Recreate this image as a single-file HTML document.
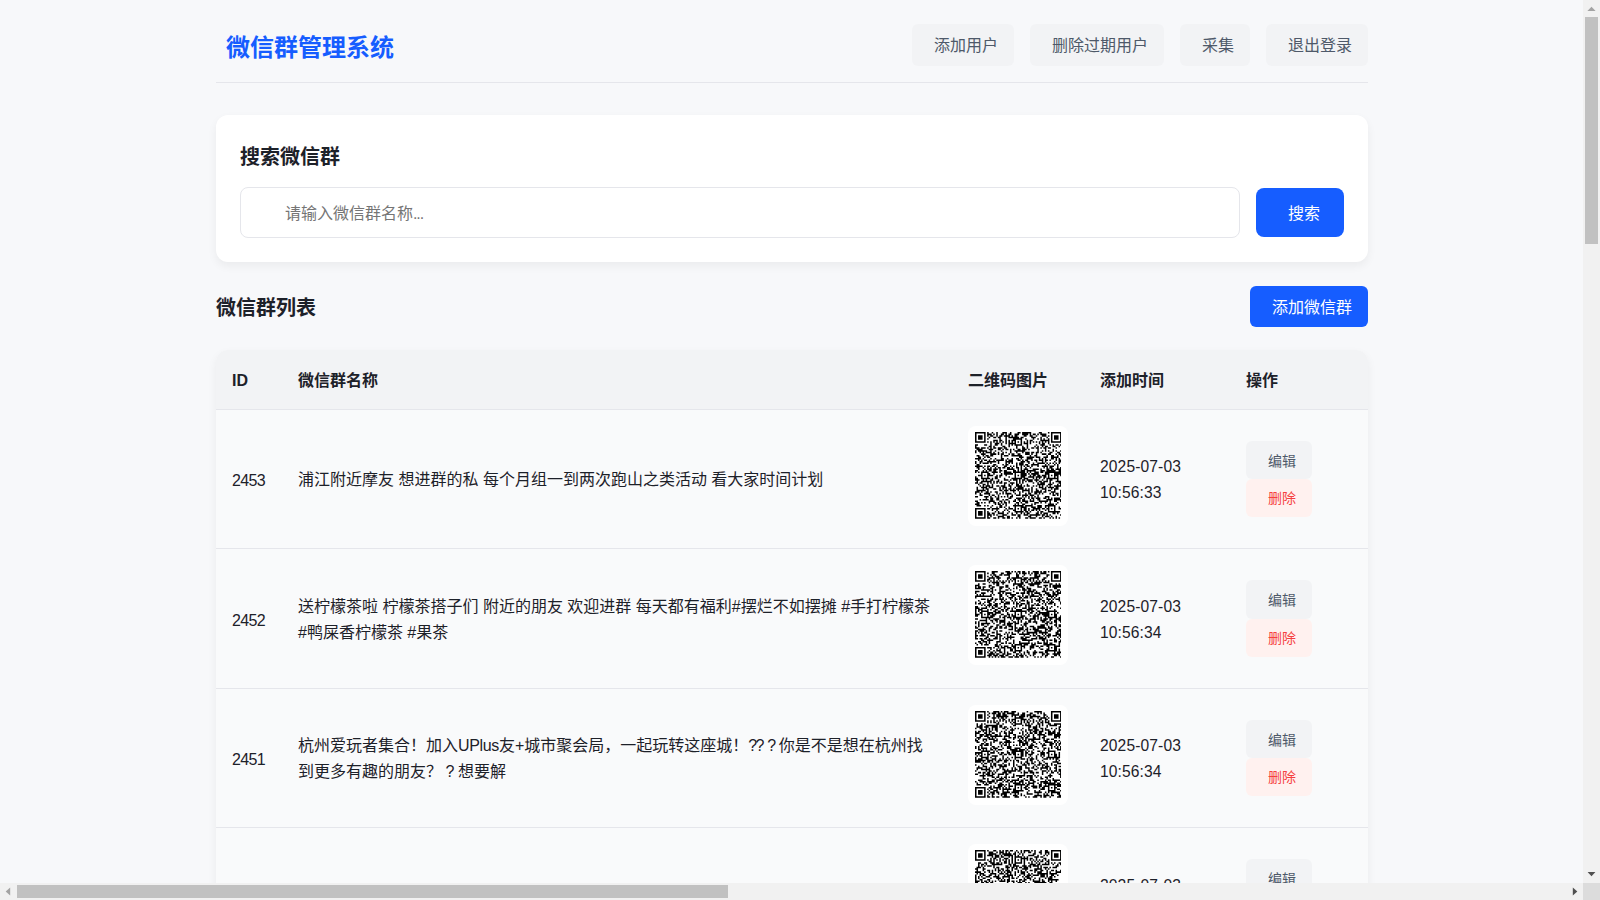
<!DOCTYPE html>
<html lang="zh-CN">
<head>
<meta charset="utf-8">
<title>微信群管理系统</title>
<style>
*{box-sizing:border-box;margin:0;padding:0}
html,body{width:1600px;height:900px;overflow:hidden}
body{background:#f7f8fa;color:#1d2129;font-family:"Liberation Sans","Noto Sans CJK SC",sans-serif;font-size:16px;line-height:25.6px;position:relative}
.page{position:absolute;left:0;top:0;width:1583px;height:883px;overflow:hidden}
.container{position:absolute;left:216px;top:0;width:1152px}
.header{position:absolute;left:0;top:0;width:1152px;height:83px;border-bottom:1px solid #e5e6eb}
.logo{position:absolute;left:10px;top:29px;font-size:24px;line-height:38.4px;font-weight:700;color:#165dff;white-space:nowrap}
.nav{position:absolute;right:0;top:24px;display:flex;gap:16px}
.nb{height:42px;border-radius:6px;background:#f2f3f5;color:#4e5969;padding:9px 16px 7px 22px;white-space:nowrap;font-size:16px;line-height:25.6px}
.card{position:absolute;left:0;top:115px;width:1152px;height:147px;background:#fff;border-radius:12px;box-shadow:0 4px 10px rgba(0,0,0,.055)}
.card h2{position:absolute;left:24px;top:26px;font-size:20px;line-height:32px;font-weight:700;color:#1d2129}
.inp{position:absolute;left:24px;top:72px;width:1000px;height:51px;border:1px solid #e5e6eb;border-radius:8px;background:#fff;padding:13px 16px 11px 44px;color:#757575;font-size:16px;line-height:25.6px}
.sbtn{position:absolute;left:1040px;top:73px;width:88px;height:49px;border-radius:8px;background:#165dff;color:#fff;padding:13px 24px 11px 32px;font-size:16px;line-height:25.6px;white-space:nowrap}
.sec h2{position:absolute;left:0;top:292px;font-size:20px;line-height:32px;font-weight:700;color:#1d2129}
.abtn{position:absolute;left:1034px;top:286px;width:118px;height:41px;border-radius:6px;background:#165dff;color:#fff;padding:9px 16px 7px 22px;font-size:16px;line-height:25.6px;white-space:nowrap}
.tbl{position:absolute;left:0;top:350px;width:1152px;height:700px;background:#f9fafb;border-radius:12px 12px 0 0;box-shadow:0 4px 10px rgba(0,0,0,.055);overflow:hidden}
.th{position:absolute;left:0;top:0;width:1152px;height:60px;background:#f2f3f5;border-bottom:1px solid #e5e6eb;font-weight:700}
.th span{position:absolute;top:18px;white-space:nowrap}
.row{position:absolute;left:0;width:1152px;border-bottom:1px solid #e5e6eb}
.c{position:absolute;top:0;bottom:0;display:flex;align-items:center;white-space:nowrap}
.id{left:16px;padding-top:4px;font-size:16px;letter-spacing:-.65px}
.nm{left:82px;padding-top:2px}
.q{position:absolute;left:752px;top:16px;width:100px;height:100px;background:#fff;border-radius:8px}
.q svg{position:absolute;left:6.6px;top:6.4px;width:86.6px;height:86.8px;display:block}
.dt{left:884px;padding-top:2px;font-size:15.6px;letter-spacing:.12px}
.ac{left:1030px;flex-direction:column;justify-content:center;align-items:flex-start}
.eb,.db{width:66px;height:38.4px;border-radius:6px;font-size:14px;line-height:22.4px;padding:8px 16px 8px 22px;flex:none}
.eb{background:#f2f3f5;color:#4e5969;padding-top:9px;padding-bottom:7px}
.db{background:#fff1ef;color:#f53f3f}
.l1{letter-spacing:-.35px}
.l2{word-spacing:-1.7px}
.l3{letter-spacing:-1.7px}
.l4{word-spacing:-.9px}
/* scrollbars */
.vsb{position:absolute;left:1583px;top:0;width:17px;height:883px;background:#f1f1f1}
.vsb .thumb{position:absolute;left:2px;top:17px;width:13px;height:227px;background:#c1c1c1}
.hsb{position:absolute;left:0;top:883px;width:1583px;height:17px;background:#f1f1f1}
.hsb .thumb{position:absolute;left:17px;top:2px;width:711px;height:13px;background:#c1c1c1}
.corner{position:absolute;left:1583px;top:883px;width:17px;height:17px;background:#dcdcdc}
</style>
</head>
<body>
<div class="page">
<div class="container">
  <div class="header">
    <div class="logo">微信群管理系统</div>
    <div class="nav">
      <div class="nb">添加用户</div>
      <div class="nb">删除过期用户</div>
      <div class="nb">采集</div>
      <div class="nb">退出登录</div>
    </div>
  </div>
  <div class="card">
    <h2>搜索微信群</h2>
    <div class="inp">请输入微信群名称<span style="letter-spacing:-1.1px">...</span></div>
    <div class="sbtn">搜索</div>
  </div>
  <div class="sec">
    <h2>微信群列表</h2>
    <div class="abtn">添加微信群</div>
  </div>
  <div class="tbl">
    <div class="th">
      <span style="left:16px">ID</span>
      <span style="left:82px">微信群名称</span>
      <span style="left:752px">二维码图片</span>
      <span style="left:884px">添加时间</span>
      <span style="left:1030px">操作</span>
    </div>
    <div class="row" style="top:60px;height:139px">
      <div class="c id">2453</div>
      <div class="c nm"><div>浦江附近摩友 想进群的私 每个月组一到两次跑山之类活动 看大家时间计划</div></div>
      <div class="q"><svg viewBox="0 0 57 57"><path fill="#000" d="M0 0h7v1h-7zM8 0h1v1h-1zM11 0h1v1h-1zM14 0h1v1h-1zM18 0h3v1h-3zM23 0h1v1h-1zM28 0h2v1h-2zM31 0h6v1h-6zM42 0h2v1h-2zM48 0h1v1h-1zM50 0h7v1h-7zM0 1h1v1h-1zM6 1h1v1h-1zM8 1h3v1h-3zM12 1h1v1h-1zM14 1h1v1h-1zM17 1h2v1h-2zM20 1h1v1h-1zM22 1h2v1h-2zM26 1h3v1h-3zM31 1h4v1h-4zM36 1h1v1h-1zM38 1h2v1h-2zM41 1h1v1h-1zM43 1h4v1h-4zM50 1h1v1h-1zM56 1h1v1h-1zM0 2h1v1h-1zM2 2h3v1h-3zM6 2h1v1h-1zM8 2h1v1h-1zM10 2h2v1h-2zM14 2h1v1h-1zM16 2h2v1h-2zM19 2h4v1h-4zM24 2h1v1h-1zM26 2h2v1h-2zM32 2h2v1h-2zM36 2h2v1h-2zM40 2h1v1h-1zM44 2h3v1h-3zM48 2h1v1h-1zM50 2h1v1h-1zM52 2h3v1h-3zM56 2h1v1h-1zM0 3h1v1h-1zM2 3h3v1h-3zM6 3h1v1h-1zM9 3h1v1h-1zM12 3h2v1h-2zM15 3h2v1h-2zM20 3h1v1h-1zM22 3h7v1h-7zM30 3h2v1h-2zM37 3h3v1h-3zM43 3h1v1h-1zM47 3h1v1h-1zM50 3h1v1h-1zM52 3h3v1h-3zM56 3h1v1h-1zM0 4h1v1h-1zM2 4h3v1h-3zM6 4h1v1h-1zM8 4h1v1h-1zM16 4h1v1h-1zM20 4h1v1h-1zM25 4h6v1h-6zM33 4h1v1h-1zM38 4h1v1h-1zM41 4h1v1h-1zM43 4h1v1h-1zM45 4h1v1h-1zM48 4h1v1h-1zM50 4h1v1h-1zM52 4h3v1h-3zM56 4h1v1h-1zM0 5h1v1h-1zM6 5h1v1h-1zM12 5h3v1h-3zM16 5h2v1h-2zM20 5h1v1h-1zM22 5h1v1h-1zM24 5h3v1h-3zM30 5h1v1h-1zM34 5h1v1h-1zM36 5h2v1h-2zM43 5h6v1h-6zM50 5h1v1h-1zM56 5h1v1h-1zM0 6h7v1h-7zM8 6h1v1h-1zM10 6h1v1h-1zM12 6h1v1h-1zM14 6h1v1h-1zM16 6h1v1h-1zM18 6h1v1h-1zM20 6h1v1h-1zM22 6h1v1h-1zM24 6h1v1h-1zM26 6h1v1h-1zM28 6h1v1h-1zM30 6h1v1h-1zM32 6h1v1h-1zM34 6h1v1h-1zM36 6h1v1h-1zM38 6h1v1h-1zM40 6h1v1h-1zM42 6h1v1h-1zM44 6h1v1h-1zM46 6h1v1h-1zM48 6h1v1h-1zM50 6h7v1h-7zM10 7h1v1h-1zM13 7h3v1h-3zM17 7h1v1h-1zM20 7h1v1h-1zM22 7h5v1h-5zM30 7h1v1h-1zM32 7h3v1h-3zM36 7h1v1h-1zM42 7h1v1h-1zM44 7h2v1h-2zM48 7h1v1h-1zM0 8h2v1h-2zM6 8h2v1h-2zM10 8h1v1h-1zM13 8h2v1h-2zM17 8h1v1h-1zM22 8h1v1h-1zM24 8h1v1h-1zM26 8h5v1h-5zM34 8h1v1h-1zM40 8h1v1h-1zM43 8h3v1h-3zM49 8h1v1h-1zM51 8h1v1h-1zM53 8h2v1h-2zM56 8h1v1h-1zM0 9h1v1h-1zM9 9h2v1h-2zM12 9h1v1h-1zM18 9h2v1h-2zM22 9h1v1h-1zM27 9h1v1h-1zM31 9h1v1h-1zM34 9h1v1h-1zM39 9h1v1h-1zM41 9h1v1h-1zM44 9h1v1h-1zM46 9h2v1h-2zM51 9h2v1h-2zM55 9h1v1h-1zM0 10h3v1h-3zM4 10h3v1h-3zM8 10h1v1h-1zM10 10h1v1h-1zM12 10h2v1h-2zM15 10h3v1h-3zM19 10h2v1h-2zM27 10h1v1h-1zM31 10h2v1h-2zM34 10h1v1h-1zM37 10h2v1h-2zM40 10h2v1h-2zM43 10h1v1h-1zM45 10h2v1h-2zM48 10h2v1h-2zM53 10h1v1h-1zM1 11h4v1h-4zM9 11h3v1h-3zM15 11h2v1h-2zM18 11h1v1h-1zM20 11h2v1h-2zM23 11h1v1h-1zM25 11h1v1h-1zM28 11h2v1h-2zM31 11h3v1h-3zM35 11h1v1h-1zM41 11h1v1h-1zM46 11h1v1h-1zM51 11h1v1h-1zM0 12h1v1h-1zM2 12h6v1h-6zM10 12h1v1h-1zM13 12h1v1h-1zM17 12h1v1h-1zM23 12h1v1h-1zM26 12h7v1h-7zM41 12h1v1h-1zM44 12h1v1h-1zM46 12h1v1h-1zM48 12h1v1h-1zM51 12h1v1h-1zM53 12h1v1h-1zM56 12h1v1h-1zM0 13h1v1h-1zM3 13h1v1h-1zM5 13h1v1h-1zM7 13h4v1h-4zM12 13h1v1h-1zM15 13h1v1h-1zM18 13h1v1h-1zM20 13h1v1h-1zM23 13h1v1h-1zM27 13h1v1h-1zM31 13h1v1h-1zM33 13h3v1h-3zM37 13h2v1h-2zM40 13h2v1h-2zM43 13h1v1h-1zM49 13h2v1h-2zM54 13h2v1h-2zM4 14h3v1h-3zM10 14h4v1h-4zM15 14h1v1h-1zM17 14h2v1h-2zM22 14h1v1h-1zM24 14h2v1h-2zM28 14h2v1h-2zM33 14h3v1h-3zM37 14h1v1h-1zM40 14h1v1h-1zM44 14h3v1h-3zM48 14h2v1h-2zM53 14h1v1h-1zM55 14h2v1h-2zM1 15h2v1h-2zM5 15h1v1h-1zM7 15h2v1h-2zM10 15h2v1h-2zM17 15h1v1h-1zM19 15h3v1h-3zM24 15h7v1h-7zM36 15h1v1h-1zM39 15h2v1h-2zM47 15h1v1h-1zM50 15h2v1h-2zM54 15h1v1h-1zM56 15h1v1h-1zM2 16h2v1h-2zM6 16h1v1h-1zM8 16h2v1h-2zM17 16h1v1h-1zM29 16h3v1h-3zM34 16h5v1h-5zM40 16h3v1h-3zM45 16h3v1h-3zM50 16h5v1h-5zM0 17h4v1h-4zM5 17h1v1h-1zM10 17h1v1h-1zM13 17h1v1h-1zM17 17h2v1h-2zM21 17h1v1h-1zM24 17h1v1h-1zM27 17h2v1h-2zM30 17h1v1h-1zM34 17h4v1h-4zM42 17h1v1h-1zM44 17h1v1h-1zM46 17h1v1h-1zM50 17h2v1h-2zM53 17h1v1h-1zM55 17h1v1h-1zM2 18h1v1h-1zM4 18h1v1h-1zM6 18h2v1h-2zM9 18h1v1h-1zM12 18h1v1h-1zM14 18h5v1h-5zM20 18h1v1h-1zM22 18h3v1h-3zM28 18h2v1h-2zM31 18h1v1h-1zM33 18h2v1h-2zM37 18h1v1h-1zM39 18h2v1h-2zM42 18h3v1h-3zM46 18h2v1h-2zM49 18h1v1h-1zM53 18h1v1h-1zM55 18h2v1h-2zM0 19h1v1h-1zM3 19h2v1h-2zM8 19h6v1h-6zM15 19h1v1h-1zM20 19h5v1h-5zM30 19h3v1h-3zM34 19h2v1h-2zM40 19h1v1h-1zM44 19h1v1h-1zM46 19h1v1h-1zM52 19h1v1h-1zM55 19h2v1h-2zM0 20h1v1h-1zM3 20h1v1h-1zM5 20h4v1h-4zM10 20h1v1h-1zM15 20h1v1h-1zM20 20h1v1h-1zM22 20h1v1h-1zM24 20h1v1h-1zM27 20h1v1h-1zM29 20h3v1h-3zM35 20h1v1h-1zM38 20h1v1h-1zM41 20h5v1h-5zM47 20h1v1h-1zM49 20h1v1h-1zM51 20h1v1h-1zM53 20h1v1h-1zM55 20h1v1h-1zM1 21h2v1h-2zM12 21h2v1h-2zM18 21h1v1h-1zM20 21h2v1h-2zM27 21h1v1h-1zM29 21h3v1h-3zM33 21h2v1h-2zM37 21h5v1h-5zM46 21h1v1h-1zM48 21h1v1h-1zM52 21h1v1h-1zM54 21h1v1h-1zM0 22h5v1h-5zM6 22h1v1h-1zM8 22h2v1h-2zM11 22h2v1h-2zM14 22h1v1h-1zM19 22h2v1h-2zM23 22h1v1h-1zM25 22h1v1h-1zM27 22h1v1h-1zM30 22h1v1h-1zM32 22h1v1h-1zM34 22h2v1h-2zM37 22h1v1h-1zM41 22h1v1h-1zM44 22h4v1h-4zM49 22h3v1h-3zM54 22h1v1h-1zM1 23h2v1h-2zM5 23h1v1h-1zM8 23h1v1h-1zM10 23h1v1h-1zM13 23h1v1h-1zM15 23h2v1h-2zM18 23h2v1h-2zM21 23h2v1h-2zM24 23h1v1h-1zM27 23h2v1h-2zM30 23h1v1h-1zM33 23h1v1h-1zM36 23h1v1h-1zM45 23h1v1h-1zM47 23h1v1h-1zM49 23h2v1h-2zM54 23h1v1h-1zM56 23h1v1h-1zM2 24h1v1h-1zM6 24h1v1h-1zM8 24h3v1h-3zM12 24h3v1h-3zM16 24h1v1h-1zM21 24h5v1h-5zM28 24h1v1h-1zM30 24h1v1h-1zM32 24h3v1h-3zM38 24h4v1h-4zM43 24h1v1h-1zM47 24h2v1h-2zM50 24h2v1h-2zM53 24h4v1h-4zM0 25h2v1h-2zM5 25h1v1h-1zM7 25h1v1h-1zM9 25h2v1h-2zM12 25h2v1h-2zM16 25h2v1h-2zM19 25h2v1h-2zM25 25h2v1h-2zM28 25h1v1h-1zM30 25h3v1h-3zM34 25h6v1h-6zM43 25h3v1h-3zM47 25h6v1h-6zM55 25h2v1h-2zM0 26h1v1h-1zM2 26h1v1h-1zM4 26h5v1h-5zM11 26h4v1h-4zM16 26h1v1h-1zM19 26h5v1h-5zM25 26h8v1h-8zM34 26h1v1h-1zM36 26h1v1h-1zM39 26h3v1h-3zM43 26h2v1h-2zM46 26h11v1h-11zM4 27h1v1h-1zM8 27h2v1h-2zM12 27h1v1h-1zM17 27h1v1h-1zM19 27h6v1h-6zM26 27h1v1h-1zM30 27h4v1h-4zM35 27h1v1h-1zM37 27h5v1h-5zM46 27h3v1h-3zM52 27h5v1h-5zM2 28h3v1h-3zM6 28h1v1h-1zM8 28h4v1h-4zM14 28h1v1h-1zM16 28h2v1h-2zM20 28h1v1h-1zM26 28h1v1h-1zM28 28h1v1h-1zM30 28h4v1h-4zM36 28h1v1h-1zM38 28h2v1h-2zM41 28h2v1h-2zM44 28h3v1h-3zM48 28h1v1h-1zM50 28h1v1h-1zM52 28h3v1h-3zM56 28h1v1h-1zM0 29h1v1h-1zM4 29h1v1h-1zM8 29h1v1h-1zM13 29h2v1h-2zM16 29h1v1h-1zM22 29h1v1h-1zM26 29h1v1h-1zM30 29h3v1h-3zM35 29h4v1h-4zM40 29h4v1h-4zM45 29h2v1h-2zM48 29h1v1h-1zM52 29h1v1h-1zM54 29h1v1h-1zM0 30h2v1h-2zM4 30h6v1h-6zM11 30h1v1h-1zM13 30h2v1h-2zM19 30h1v1h-1zM24 30h7v1h-7zM32 30h3v1h-3zM38 30h1v1h-1zM40 30h1v1h-1zM42 30h1v1h-1zM45 30h1v1h-1zM47 30h8v1h-8zM0 31h3v1h-3zM5 31h1v1h-1zM7 31h1v1h-1zM10 31h2v1h-2zM15 31h1v1h-1zM19 31h3v1h-3zM23 31h1v1h-1zM25 31h3v1h-3zM29 31h1v1h-1zM31 31h2v1h-2zM34 31h4v1h-4zM39 31h3v1h-3zM44 31h1v1h-1zM47 31h1v1h-1zM49 31h2v1h-2zM54 31h1v1h-1zM1 32h1v1h-1zM4 32h7v1h-7zM12 32h1v1h-1zM14 32h2v1h-2zM17 32h1v1h-1zM22 32h1v1h-1zM27 32h1v1h-1zM29 32h1v1h-1zM31 32h1v1h-1zM33 32h1v1h-1zM35 32h3v1h-3zM40 32h1v1h-1zM42 32h2v1h-2zM45 32h3v1h-3zM49 32h1v1h-1zM53 32h4v1h-4zM0 33h2v1h-2zM3 33h2v1h-2zM8 33h1v1h-1zM10 33h1v1h-1zM12 33h1v1h-1zM14 33h1v1h-1zM16 33h2v1h-2zM19 33h2v1h-2zM23 33h3v1h-3zM27 33h1v1h-1zM29 33h1v1h-1zM31 33h1v1h-1zM38 33h1v1h-1zM41 33h1v1h-1zM43 33h3v1h-3zM49 33h1v1h-1zM51 33h1v1h-1zM55 33h2v1h-2zM2 34h1v1h-1zM5 34h2v1h-2zM8 34h1v1h-1zM11 34h1v1h-1zM19 34h1v1h-1zM22 34h1v1h-1zM24 34h1v1h-1zM27 34h2v1h-2zM30 34h1v1h-1zM34 34h1v1h-1zM41 34h5v1h-5zM48 34h3v1h-3zM54 34h1v1h-1zM56 34h1v1h-1zM3 35h1v1h-1zM5 35h1v1h-1zM7 35h3v1h-3zM11 35h1v1h-1zM14 35h2v1h-2zM17 35h3v1h-3zM22 35h2v1h-2zM27 35h4v1h-4zM32 35h1v1h-1zM34 35h2v1h-2zM38 35h1v1h-1zM40 35h1v1h-1zM42 35h1v1h-1zM44 35h1v1h-1zM47 35h1v1h-1zM49 35h1v1h-1zM52 35h5v1h-5zM1 36h1v1h-1zM4 36h4v1h-4zM9 36h3v1h-3zM16 36h1v1h-1zM18 36h3v1h-3zM23 36h1v1h-1zM26 36h1v1h-1zM28 36h4v1h-4zM37 36h1v1h-1zM42 36h3v1h-3zM46 36h1v1h-1zM48 36h4v1h-4zM53 36h2v1h-2zM1 37h1v1h-1zM5 37h1v1h-1zM7 37h2v1h-2zM12 37h2v1h-2zM16 37h1v1h-1zM18 37h1v1h-1zM20 37h1v1h-1zM22 37h2v1h-2zM25 37h1v1h-1zM27 37h5v1h-5zM33 37h1v1h-1zM35 37h1v1h-1zM37 37h1v1h-1zM40 37h1v1h-1zM44 37h3v1h-3zM50 37h1v1h-1zM52 37h3v1h-3zM1 38h6v1h-6zM8 38h1v1h-1zM16 38h2v1h-2zM19 38h3v1h-3zM23 38h4v1h-4zM28 38h1v1h-1zM31 38h5v1h-5zM37 38h1v1h-1zM40 38h2v1h-2zM43 38h1v1h-1zM46 38h1v1h-1zM48 38h2v1h-2zM52 38h1v1h-1zM56 38h1v1h-1zM0 39h3v1h-3zM4 39h1v1h-1zM7 39h2v1h-2zM10 39h1v1h-1zM13 39h2v1h-2zM18 39h1v1h-1zM20 39h1v1h-1zM25 39h1v1h-1zM29 39h1v1h-1zM31 39h1v1h-1zM35 39h1v1h-1zM37 39h1v1h-1zM39 39h5v1h-5zM45 39h2v1h-2zM50 39h3v1h-3zM56 39h1v1h-1zM0 40h1v1h-1zM3 40h1v1h-1zM6 40h4v1h-4zM14 40h1v1h-1zM16 40h1v1h-1zM18 40h1v1h-1zM20 40h4v1h-4zM26 40h1v1h-1zM29 40h1v1h-1zM33 40h1v1h-1zM35 40h2v1h-2zM39 40h2v1h-2zM42 40h1v1h-1zM44 40h1v1h-1zM49 40h1v1h-1zM51 40h1v1h-1zM53 40h2v1h-2zM56 40h1v1h-1zM3 41h2v1h-2zM9 41h1v1h-1zM11 41h2v1h-2zM15 41h1v1h-1zM21 41h1v1h-1zM24 41h1v1h-1zM27 41h3v1h-3zM31 41h4v1h-4zM36 41h3v1h-3zM41 41h1v1h-1zM51 41h2v1h-2zM54 41h1v1h-1zM56 41h1v1h-1zM0 42h2v1h-2zM6 42h3v1h-3zM10 42h1v1h-1zM13 42h1v1h-1zM15 42h1v1h-1zM17 42h1v1h-1zM19 42h1v1h-1zM21 42h1v1h-1zM23 42h2v1h-2zM31 42h1v1h-1zM33 42h1v1h-1zM35 42h1v1h-1zM37 42h1v1h-1zM39 42h1v1h-1zM41 42h1v1h-1zM46 42h3v1h-3zM56 42h1v1h-1zM7 43h1v1h-1zM10 43h2v1h-2zM14 43h2v1h-2zM22 43h2v1h-2zM27 43h4v1h-4zM32 43h1v1h-1zM35 43h1v1h-1zM37 43h2v1h-2zM40 43h3v1h-3zM45 43h2v1h-2zM48 43h1v1h-1zM50 43h1v1h-1zM52 43h4v1h-4zM3 44h1v1h-1zM5 44h4v1h-4zM10 44h2v1h-2zM14 44h2v1h-2zM18 44h1v1h-1zM20 44h2v1h-2zM26 44h1v1h-1zM28 44h2v1h-2zM31 44h2v1h-2zM36 44h1v1h-1zM38 44h1v1h-1zM41 44h2v1h-2zM47 44h4v1h-4zM52 44h5v1h-5zM0 45h2v1h-2zM9 45h4v1h-4zM16 45h2v1h-2zM19 45h1v1h-1zM22 45h1v1h-1zM25 45h2v1h-2zM29 45h1v1h-1zM31 45h4v1h-4zM36 45h3v1h-3zM42 45h6v1h-6zM49 45h1v1h-1zM52 45h2v1h-2zM56 45h1v1h-1zM1 46h2v1h-2zM4 46h1v1h-1zM6 46h1v1h-1zM9 46h1v1h-1zM12 46h2v1h-2zM15 46h1v1h-1zM17 46h1v1h-1zM19 46h2v1h-2zM22 46h1v1h-1zM27 46h2v1h-2zM30 46h1v1h-1zM33 46h2v1h-2zM39 46h3v1h-3zM43 46h1v1h-1zM46 46h1v1h-1zM49 46h1v1h-1zM54 46h1v1h-1zM0 47h3v1h-3zM13 47h1v1h-1zM15 47h2v1h-2zM18 47h1v1h-1zM20 47h1v1h-1zM26 47h1v1h-1zM28 47h1v1h-1zM31 47h2v1h-2zM37 47h1v1h-1zM39 47h1v1h-1zM48 47h4v1h-4zM53 47h1v1h-1zM1 48h3v1h-3zM6 48h1v1h-1zM8 48h1v1h-1zM11 48h1v1h-1zM16 48h2v1h-2zM20 48h1v1h-1zM25 48h7v1h-7zM33 48h5v1h-5zM41 48h3v1h-3zM46 48h7v1h-7zM10 49h1v1h-1zM14 49h1v1h-1zM16 49h2v1h-2zM19 49h1v1h-1zM22 49h1v1h-1zM26 49h1v1h-1zM30 49h4v1h-4zM37 49h3v1h-3zM41 49h3v1h-3zM46 49h1v1h-1zM48 49h1v1h-1zM52 49h1v1h-1zM55 49h1v1h-1zM0 50h7v1h-7zM8 50h2v1h-2zM11 50h5v1h-5zM20 50h1v1h-1zM22 50h3v1h-3zM26 50h1v1h-1zM28 50h1v1h-1zM30 50h1v1h-1zM32 50h2v1h-2zM35 50h1v1h-1zM38 50h5v1h-5zM44 50h2v1h-2zM47 50h2v1h-2zM50 50h1v1h-1zM52 50h1v1h-1zM55 50h2v1h-2zM0 51h1v1h-1zM6 51h1v1h-1zM11 51h1v1h-1zM14 51h1v1h-1zM19 51h1v1h-1zM21 51h1v1h-1zM25 51h2v1h-2zM30 51h1v1h-1zM32 51h2v1h-2zM35 51h1v1h-1zM37 51h2v1h-2zM40 51h1v1h-1zM42 51h1v1h-1zM46 51h1v1h-1zM48 51h1v1h-1zM52 51h1v1h-1zM0 52h1v1h-1zM2 52h3v1h-3zM6 52h1v1h-1zM8 52h1v1h-1zM13 52h1v1h-1zM15 52h1v1h-1zM18 52h1v1h-1zM22 52h1v1h-1zM26 52h6v1h-6zM33 52h2v1h-2zM36 52h1v1h-1zM41 52h1v1h-1zM43 52h2v1h-2zM48 52h8v1h-8zM0 53h1v1h-1zM2 53h3v1h-3zM6 53h1v1h-1zM8 53h2v1h-2zM11 53h2v1h-2zM15 53h4v1h-4zM21 53h1v1h-1zM24 53h1v1h-1zM27 53h1v1h-1zM30 53h1v1h-1zM32 53h1v1h-1zM34 53h2v1h-2zM40 53h2v1h-2zM43 53h1v1h-1zM45 53h3v1h-3zM51 53h2v1h-2zM54 53h1v1h-1zM0 54h1v1h-1zM2 54h3v1h-3zM6 54h1v1h-1zM8 54h3v1h-3zM12 54h1v1h-1zM14 54h1v1h-1zM18 54h3v1h-3zM24 54h3v1h-3zM28 54h2v1h-2zM32 54h3v1h-3zM36 54h7v1h-7zM44 54h2v1h-2zM47 54h1v1h-1zM49 54h1v1h-1zM56 54h1v1h-1zM0 55h1v1h-1zM6 55h1v1h-1zM8 55h1v1h-1zM10 55h1v1h-1zM15 55h4v1h-4zM21 55h2v1h-2zM28 55h2v1h-2zM35 55h2v1h-2zM40 55h1v1h-1zM44 55h1v1h-1zM46 55h3v1h-3zM50 55h1v1h-1zM53 55h1v1h-1zM0 56h7v1h-7zM8 56h2v1h-2zM12 56h2v1h-2zM15 56h1v1h-1zM18 56h2v1h-2zM21 56h2v1h-2zM24 56h1v1h-1zM27 56h1v1h-1zM29 56h1v1h-1zM33 56h2v1h-2zM36 56h4v1h-4zM42 56h2v1h-2zM45 56h1v1h-1zM49 56h1v1h-1zM51 56h1v1h-1zM53 56h1v1h-1zM55 56h1v1h-1z"/></svg></div>
      <div class="c dt"><div>2025-07-03<br>10:56:33</div></div>
      <div class="c ac"><div class="eb">编辑</div><div class="db">删除</div></div>
    </div>
    <div class="row" style="top:199px;height:140px">
      <div class="c id">2452</div>
      <div class="c nm"><div>送柠檬茶啦 柠檬茶搭子们 附近的朋友 欢迎进群 每天都有福利#摆烂不如摆摊 #手打柠檬茶<br>#鸭屎香柠檬茶 #果茶</div></div>
      <div class="q"><svg viewBox="0 0 57 57"><path fill="#000" d="M0 0h7v1h-7zM11 0h4v1h-4zM20 0h3v1h-3zM24 0h1v1h-1zM26 0h1v1h-1zM28 0h2v1h-2zM31 0h2v1h-2zM35 0h1v1h-1zM38 0h4v1h-4zM43 0h1v1h-1zM45 0h2v1h-2zM48 0h1v1h-1zM50 0h7v1h-7zM0 1h1v1h-1zM6 1h1v1h-1zM8 1h1v1h-1zM11 1h2v1h-2zM17 1h2v1h-2zM21 1h3v1h-3zM27 1h1v1h-1zM29 1h1v1h-1zM31 1h3v1h-3zM35 1h1v1h-1zM37 1h1v1h-1zM39 1h3v1h-3zM43 1h4v1h-4zM50 1h1v1h-1zM56 1h1v1h-1zM0 2h1v1h-1zM2 2h3v1h-3zM6 2h1v1h-1zM10 2h1v1h-1zM12 2h2v1h-2zM16 2h2v1h-2zM19 2h4v1h-4zM27 2h2v1h-2zM32 2h1v1h-1zM36 2h1v1h-1zM39 2h2v1h-2zM42 2h1v1h-1zM47 2h2v1h-2zM50 2h1v1h-1zM52 2h3v1h-3zM56 2h1v1h-1zM0 3h1v1h-1zM2 3h3v1h-3zM6 3h1v1h-1zM8 3h1v1h-1zM11 3h1v1h-1zM13 3h3v1h-3zM22 3h1v1h-1zM27 3h2v1h-2zM31 3h1v1h-1zM39 3h4v1h-4zM47 3h1v1h-1zM50 3h1v1h-1zM52 3h3v1h-3zM56 3h1v1h-1zM0 4h1v1h-1zM2 4h3v1h-3zM6 4h1v1h-1zM9 4h4v1h-4zM14 4h3v1h-3zM21 4h2v1h-2zM24 4h7v1h-7zM32 4h3v1h-3zM36 4h6v1h-6zM45 4h2v1h-2zM50 4h1v1h-1zM52 4h3v1h-3zM56 4h1v1h-1zM0 5h1v1h-1zM6 5h1v1h-1zM8 5h2v1h-2zM12 5h1v1h-1zM15 5h1v1h-1zM21 5h1v1h-1zM23 5h1v1h-1zM25 5h2v1h-2zM30 5h4v1h-4zM35 5h2v1h-2zM38 5h1v1h-1zM41 5h1v1h-1zM44 5h2v1h-2zM50 5h1v1h-1zM56 5h1v1h-1zM0 6h7v1h-7zM8 6h1v1h-1zM10 6h1v1h-1zM12 6h1v1h-1zM14 6h1v1h-1zM16 6h1v1h-1zM18 6h1v1h-1zM20 6h1v1h-1zM22 6h1v1h-1zM24 6h1v1h-1zM26 6h1v1h-1zM28 6h1v1h-1zM30 6h1v1h-1zM32 6h1v1h-1zM34 6h1v1h-1zM36 6h1v1h-1zM38 6h1v1h-1zM40 6h1v1h-1zM42 6h1v1h-1zM44 6h1v1h-1zM46 6h1v1h-1zM48 6h1v1h-1zM50 6h7v1h-7zM9 7h1v1h-1zM11 7h5v1h-5zM17 7h3v1h-3zM22 7h1v1h-1zM26 7h1v1h-1zM30 7h2v1h-2zM33 7h2v1h-2zM37 7h1v1h-1zM39 7h5v1h-5zM45 7h4v1h-4zM2 8h1v1h-1zM5 8h2v1h-2zM12 8h1v1h-1zM14 8h2v1h-2zM18 8h1v1h-1zM25 8h7v1h-7zM35 8h8v1h-8zM49 8h2v1h-2zM53 8h1v1h-1zM55 8h1v1h-1zM0 9h3v1h-3zM9 9h2v1h-2zM14 9h2v1h-2zM20 9h2v1h-2zM25 9h1v1h-1zM28 9h3v1h-3zM32 9h1v1h-1zM36 9h3v1h-3zM41 9h1v1h-1zM45 9h3v1h-3zM49 9h1v1h-1zM51 9h6v1h-6zM0 10h1v1h-1zM2 10h2v1h-2zM5 10h2v1h-2zM9 10h1v1h-1zM11 10h2v1h-2zM16 10h3v1h-3zM20 10h2v1h-2zM27 10h1v1h-1zM29 10h3v1h-3zM34 10h1v1h-1zM41 10h3v1h-3zM46 10h1v1h-1zM49 10h1v1h-1zM51 10h6v1h-6zM0 11h4v1h-4zM5 11h1v1h-1zM10 11h2v1h-2zM16 11h2v1h-2zM22 11h1v1h-1zM25 11h1v1h-1zM27 11h1v1h-1zM31 11h2v1h-2zM34 11h3v1h-3zM45 11h1v1h-1zM47 11h1v1h-1zM52 11h2v1h-2zM4 12h6v1h-6zM11 12h1v1h-1zM13 12h1v1h-1zM16 12h1v1h-1zM20 12h2v1h-2zM23 12h1v1h-1zM29 12h1v1h-1zM31 12h3v1h-3zM35 12h2v1h-2zM38 12h2v1h-2zM45 12h1v1h-1zM47 12h1v1h-1zM49 12h2v1h-2zM54 12h2v1h-2zM0 13h3v1h-3zM8 13h1v1h-1zM10 13h2v1h-2zM16 13h4v1h-4zM25 13h1v1h-1zM32 13h1v1h-1zM34 13h5v1h-5zM40 13h1v1h-1zM44 13h3v1h-3zM51 13h1v1h-1zM53 13h2v1h-2zM56 13h1v1h-1zM0 14h1v1h-1zM4 14h3v1h-3zM11 14h1v1h-1zM15 14h2v1h-2zM18 14h1v1h-1zM20 14h4v1h-4zM27 14h2v1h-2zM30 14h3v1h-3zM34 14h2v1h-2zM37 14h1v1h-1zM39 14h4v1h-4zM46 14h3v1h-3zM51 14h2v1h-2zM54 14h3v1h-3zM1 15h1v1h-1zM3 15h1v1h-1zM5 15h1v1h-1zM10 15h1v1h-1zM12 15h1v1h-1zM16 15h2v1h-2zM20 15h1v1h-1zM23 15h4v1h-4zM31 15h1v1h-1zM35 15h1v1h-1zM37 15h2v1h-2zM42 15h2v1h-2zM45 15h1v1h-1zM47 15h3v1h-3zM51 15h4v1h-4zM0 16h11v1h-11zM16 16h2v1h-2zM21 16h1v1h-1zM24 16h2v1h-2zM28 16h2v1h-2zM31 16h1v1h-1zM33 16h2v1h-2zM36 16h6v1h-6zM43 16h1v1h-1zM48 16h4v1h-4zM53 16h1v1h-1zM0 17h1v1h-1zM11 17h1v1h-1zM16 17h1v1h-1zM18 17h1v1h-1zM22 17h3v1h-3zM26 17h1v1h-1zM29 17h2v1h-2zM32 17h3v1h-3zM36 17h1v1h-1zM42 17h1v1h-1zM44 17h1v1h-1zM47 17h1v1h-1zM50 17h1v1h-1zM52 17h1v1h-1zM55 17h1v1h-1zM4 18h3v1h-3zM8 18h1v1h-1zM10 18h2v1h-2zM13 18h2v1h-2zM16 18h3v1h-3zM20 18h1v1h-1zM23 18h1v1h-1zM26 18h2v1h-2zM29 18h1v1h-1zM31 18h1v1h-1zM37 18h1v1h-1zM39 18h1v1h-1zM41 18h3v1h-3zM47 18h3v1h-3zM51 18h1v1h-1zM53 18h3v1h-3zM2 19h1v1h-1zM8 19h3v1h-3zM13 19h1v1h-1zM17 19h1v1h-1zM19 19h1v1h-1zM24 19h1v1h-1zM26 19h1v1h-1zM30 19h3v1h-3zM34 19h1v1h-1zM37 19h1v1h-1zM40 19h3v1h-3zM44 19h2v1h-2zM48 19h1v1h-1zM50 19h1v1h-1zM55 19h1v1h-1zM0 20h1v1h-1zM3 20h1v1h-1zM6 20h1v1h-1zM8 20h2v1h-2zM12 20h1v1h-1zM17 20h2v1h-2zM20 20h3v1h-3zM25 20h1v1h-1zM27 20h1v1h-1zM29 20h1v1h-1zM34 20h2v1h-2zM37 20h1v1h-1zM42 20h1v1h-1zM45 20h1v1h-1zM47 20h1v1h-1zM49 20h3v1h-3zM56 20h1v1h-1zM0 21h1v1h-1zM2 21h2v1h-2zM5 21h1v1h-1zM9 21h2v1h-2zM13 21h2v1h-2zM16 21h1v1h-1zM19 21h4v1h-4zM25 21h1v1h-1zM27 21h2v1h-2zM30 21h3v1h-3zM34 21h2v1h-2zM39 21h1v1h-1zM41 21h1v1h-1zM44 21h1v1h-1zM46 21h1v1h-1zM48 21h3v1h-3zM52 21h1v1h-1zM56 21h1v1h-1zM4 22h1v1h-1zM6 22h1v1h-1zM8 22h3v1h-3zM12 22h3v1h-3zM19 22h1v1h-1zM27 22h1v1h-1zM29 22h2v1h-2zM33 22h1v1h-1zM35 22h1v1h-1zM37 22h2v1h-2zM40 22h3v1h-3zM46 22h1v1h-1zM52 22h1v1h-1zM0 23h2v1h-2zM7 23h1v1h-1zM9 23h1v1h-1zM11 23h1v1h-1zM13 23h2v1h-2zM17 23h1v1h-1zM19 23h2v1h-2zM25 23h1v1h-1zM27 23h1v1h-1zM29 23h1v1h-1zM33 23h1v1h-1zM35 23h1v1h-1zM37 23h1v1h-1zM44 23h1v1h-1zM47 23h1v1h-1zM50 23h1v1h-1zM54 23h1v1h-1zM0 24h3v1h-3zM4 24h4v1h-4zM11 24h2v1h-2zM15 24h2v1h-2zM19 24h1v1h-1zM21 24h2v1h-2zM24 24h1v1h-1zM26 24h1v1h-1zM31 24h3v1h-3zM35 24h5v1h-5zM41 24h1v1h-1zM43 24h3v1h-3zM47 24h1v1h-1zM49 24h1v1h-1zM56 24h1v1h-1zM0 25h1v1h-1zM2 25h3v1h-3zM8 25h1v1h-1zM10 25h1v1h-1zM13 25h2v1h-2zM17 25h2v1h-2zM20 25h2v1h-2zM24 25h1v1h-1zM27 25h4v1h-4zM34 25h4v1h-4zM40 25h1v1h-1zM44 25h1v1h-1zM46 25h2v1h-2zM52 25h1v1h-1zM0 26h1v1h-1zM2 26h1v1h-1zM4 26h5v1h-5zM12 26h2v1h-2zM15 26h2v1h-2zM18 26h1v1h-1zM20 26h1v1h-1zM23 26h11v1h-11zM35 26h1v1h-1zM37 26h2v1h-2zM41 26h2v1h-2zM47 26h7v1h-7zM0 27h1v1h-1zM3 27h2v1h-2zM8 27h4v1h-4zM13 27h4v1h-4zM21 27h1v1h-1zM26 27h1v1h-1zM30 27h1v1h-1zM33 27h1v1h-1zM36 27h2v1h-2zM40 27h1v1h-1zM42 27h7v1h-7zM52 27h1v1h-1zM54 27h1v1h-1zM0 28h3v1h-3zM4 28h1v1h-1zM6 28h1v1h-1zM8 28h2v1h-2zM11 28h3v1h-3zM17 28h2v1h-2zM21 28h2v1h-2zM24 28h1v1h-1zM26 28h1v1h-1zM28 28h1v1h-1zM30 28h1v1h-1zM35 28h1v1h-1zM39 28h1v1h-1zM41 28h2v1h-2zM44 28h5v1h-5zM50 28h1v1h-1zM52 28h2v1h-2zM0 29h2v1h-2zM4 29h1v1h-1zM8 29h1v1h-1zM10 29h3v1h-3zM16 29h1v1h-1zM19 29h2v1h-2zM22 29h1v1h-1zM24 29h3v1h-3zM30 29h3v1h-3zM36 29h1v1h-1zM38 29h4v1h-4zM45 29h4v1h-4zM52 29h2v1h-2zM56 29h1v1h-1zM4 30h8v1h-8zM16 30h1v1h-1zM18 30h2v1h-2zM21 30h3v1h-3zM25 30h7v1h-7zM33 30h1v1h-1zM38 30h2v1h-2zM41 30h1v1h-1zM43 30h1v1h-1zM46 30h1v1h-1zM48 30h6v1h-6zM55 30h2v1h-2zM0 31h2v1h-2zM7 31h1v1h-1zM9 31h1v1h-1zM12 31h4v1h-4zM19 31h1v1h-1zM23 31h1v1h-1zM25 31h1v1h-1zM27 31h3v1h-3zM31 31h1v1h-1zM33 31h2v1h-2zM36 31h4v1h-4zM41 31h1v1h-1zM43 31h1v1h-1zM45 31h3v1h-3zM49 31h2v1h-2zM53 31h4v1h-4zM3 32h5v1h-5zM10 32h2v1h-2zM13 32h2v1h-2zM16 32h4v1h-4zM24 32h1v1h-1zM28 32h1v1h-1zM30 32h1v1h-1zM35 32h2v1h-2zM39 32h1v1h-1zM43 32h4v1h-4zM49 32h1v1h-1zM52 32h2v1h-2zM55 32h2v1h-2zM0 33h1v1h-1zM2 33h1v1h-1zM7 33h1v1h-1zM11 33h1v1h-1zM14 33h1v1h-1zM16 33h4v1h-4zM22 33h1v1h-1zM25 33h2v1h-2zM28 33h1v1h-1zM30 33h1v1h-1zM33 33h1v1h-1zM35 33h2v1h-2zM38 33h3v1h-3zM44 33h2v1h-2zM47 33h2v1h-2zM50 33h1v1h-1zM52 33h2v1h-2zM56 33h1v1h-1zM0 34h1v1h-1zM2 34h1v1h-1zM4 34h6v1h-6zM12 34h1v1h-1zM16 34h1v1h-1zM19 34h1v1h-1zM21 34h4v1h-4zM26 34h3v1h-3zM32 34h3v1h-3zM40 34h1v1h-1zM46 34h2v1h-2zM49 34h2v1h-2zM53 34h1v1h-1zM2 35h1v1h-1zM4 35h2v1h-2zM8 35h1v1h-1zM14 35h2v1h-2zM18 35h2v1h-2zM21 35h3v1h-3zM26 35h1v1h-1zM30 35h1v1h-1zM32 35h2v1h-2zM43 35h3v1h-3zM47 35h1v1h-1zM52 35h2v1h-2zM55 35h2v1h-2zM0 36h1v1h-1zM2 36h1v1h-1zM6 36h2v1h-2zM10 36h2v1h-2zM14 36h1v1h-1zM16 36h2v1h-2zM20 36h1v1h-1zM22 36h3v1h-3zM26 36h1v1h-1zM31 36h1v1h-1zM33 36h1v1h-1zM36 36h3v1h-3zM41 36h5v1h-5zM48 36h1v1h-1zM50 36h1v1h-1zM53 36h1v1h-1zM55 36h2v1h-2zM0 37h2v1h-2zM5 37h1v1h-1zM9 37h2v1h-2zM13 37h2v1h-2zM16 37h2v1h-2zM19 37h2v1h-2zM24 37h1v1h-1zM26 37h2v1h-2zM29 37h3v1h-3zM34 37h1v1h-1zM38 37h2v1h-2zM41 37h6v1h-6zM48 37h3v1h-3zM54 37h1v1h-1zM2 38h5v1h-5zM9 38h1v1h-1zM12 38h2v1h-2zM22 38h3v1h-3zM26 38h1v1h-1zM28 38h4v1h-4zM33 38h2v1h-2zM36 38h1v1h-1zM38 38h4v1h-4zM46 38h2v1h-2zM49 38h2v1h-2zM55 38h2v1h-2zM0 39h2v1h-2zM3 39h3v1h-3zM7 39h1v1h-1zM9 39h1v1h-1zM14 39h1v1h-1zM16 39h2v1h-2zM26 39h4v1h-4zM32 39h1v1h-1zM34 39h1v1h-1zM39 39h5v1h-5zM46 39h1v1h-1zM48 39h2v1h-2zM54 39h3v1h-3zM0 40h1v1h-1zM2 40h1v1h-1zM4 40h1v1h-1zM6 40h2v1h-2zM11 40h2v1h-2zM14 40h1v1h-1zM20 40h1v1h-1zM22 40h1v1h-1zM24 40h1v1h-1zM28 40h1v1h-1zM31 40h1v1h-1zM34 40h7v1h-7zM42 40h6v1h-6zM53 40h2v1h-2zM56 40h1v1h-1zM0 41h1v1h-1zM4 41h2v1h-2zM8 41h2v1h-2zM14 41h3v1h-3zM19 41h1v1h-1zM21 41h1v1h-1zM24 41h3v1h-3zM29 41h7v1h-7zM38 41h1v1h-1zM40 41h1v1h-1zM44 41h1v1h-1zM46 41h1v1h-1zM48 41h2v1h-2zM53 41h4v1h-4zM0 42h2v1h-2zM3 42h4v1h-4zM8 42h1v1h-1zM10 42h3v1h-3zM14 42h1v1h-1zM16 42h2v1h-2zM21 42h1v1h-1zM23 42h1v1h-1zM32 42h1v1h-1zM36 42h1v1h-1zM38 42h2v1h-2zM41 42h2v1h-2zM45 42h1v1h-1zM47 42h3v1h-3zM51 42h3v1h-3zM55 42h2v1h-2zM0 43h1v1h-1zM7 43h2v1h-2zM13 43h2v1h-2zM16 43h1v1h-1zM19 43h1v1h-1zM21 43h5v1h-5zM30 43h2v1h-2zM33 43h3v1h-3zM40 43h1v1h-1zM42 43h3v1h-3zM46 43h1v1h-1zM48 43h1v1h-1zM54 43h1v1h-1zM56 43h1v1h-1zM0 44h2v1h-2zM3 44h2v1h-2zM6 44h2v1h-2zM9 44h1v1h-1zM12 44h3v1h-3zM16 44h1v1h-1zM18 44h1v1h-1zM20 44h2v1h-2zM23 44h1v1h-1zM30 44h4v1h-4zM37 44h4v1h-4zM42 44h5v1h-5zM52 44h1v1h-1zM55 44h1v1h-1zM4 45h2v1h-2zM8 45h4v1h-4zM16 45h1v1h-1zM21 45h1v1h-1zM25 45h1v1h-1zM31 45h7v1h-7zM44 45h2v1h-2zM47 45h1v1h-1zM49 45h2v1h-2zM52 45h2v1h-2zM56 45h1v1h-1zM2 46h2v1h-2zM5 46h3v1h-3zM9 46h1v1h-1zM14 46h3v1h-3zM20 46h1v1h-1zM25 46h1v1h-1zM29 46h1v1h-1zM35 46h1v1h-1zM41 46h1v1h-1zM45 46h1v1h-1zM47 46h1v1h-1zM52 46h2v1h-2zM55 46h2v1h-2zM0 47h1v1h-1zM3 47h2v1h-2zM7 47h1v1h-1zM9 47h1v1h-1zM14 47h1v1h-1zM17 47h2v1h-2zM20 47h1v1h-1zM22 47h2v1h-2zM25 47h1v1h-1zM29 47h7v1h-7zM37 47h1v1h-1zM39 47h1v1h-1zM41 47h3v1h-3zM45 47h3v1h-3zM49 47h2v1h-2zM55 47h1v1h-1zM1 48h1v1h-1zM4 48h1v1h-1zM6 48h3v1h-3zM13 48h2v1h-2zM16 48h1v1h-1zM24 48h1v1h-1zM26 48h5v1h-5zM32 48h3v1h-3zM37 48h3v1h-3zM45 48h8v1h-8zM55 48h1v1h-1zM13 49h3v1h-3zM17 49h1v1h-1zM19 49h3v1h-3zM24 49h3v1h-3zM30 49h3v1h-3zM36 49h3v1h-3zM40 49h2v1h-2zM43 49h2v1h-2zM47 49h2v1h-2zM52 49h4v1h-4zM0 50h7v1h-7zM8 50h3v1h-3zM12 50h1v1h-1zM15 50h1v1h-1zM17 50h3v1h-3zM21 50h3v1h-3zM25 50h2v1h-2zM28 50h1v1h-1zM30 50h1v1h-1zM32 50h1v1h-1zM36 50h3v1h-3zM42 50h1v1h-1zM48 50h1v1h-1zM50 50h1v1h-1zM52 50h2v1h-2zM0 51h1v1h-1zM6 51h1v1h-1zM10 51h1v1h-1zM14 51h1v1h-1zM16 51h1v1h-1zM19 51h1v1h-1zM23 51h2v1h-2zM26 51h1v1h-1zM30 51h1v1h-1zM36 51h1v1h-1zM43 51h2v1h-2zM47 51h2v1h-2zM52 51h2v1h-2zM55 51h1v1h-1zM0 52h1v1h-1zM2 52h3v1h-3zM6 52h1v1h-1zM9 52h1v1h-1zM12 52h1v1h-1zM14 52h3v1h-3zM19 52h1v1h-1zM23 52h2v1h-2zM26 52h5v1h-5zM34 52h1v1h-1zM39 52h1v1h-1zM46 52h8v1h-8zM55 52h1v1h-1zM0 53h1v1h-1zM2 53h3v1h-3zM6 53h1v1h-1zM8 53h1v1h-1zM10 53h2v1h-2zM13 53h1v1h-1zM16 53h2v1h-2zM19 53h1v1h-1zM21 53h1v1h-1zM25 53h2v1h-2zM29 53h1v1h-1zM32 53h1v1h-1zM34 53h2v1h-2zM38 53h3v1h-3zM42 53h3v1h-3zM46 53h2v1h-2zM52 53h1v1h-1zM54 53h3v1h-3zM0 54h1v1h-1zM2 54h3v1h-3zM6 54h1v1h-1zM9 54h4v1h-4zM14 54h2v1h-2zM18 54h2v1h-2zM21 54h3v1h-3zM27 54h2v1h-2zM30 54h1v1h-1zM32 54h1v1h-1zM35 54h1v1h-1zM38 54h2v1h-2zM44 54h2v1h-2zM47 54h2v1h-2zM51 54h5v1h-5zM0 55h1v1h-1zM6 55h1v1h-1zM8 55h3v1h-3zM12 55h3v1h-3zM16 55h3v1h-3zM20 55h2v1h-2zM25 55h1v1h-1zM27 55h1v1h-1zM29 55h3v1h-3zM33 55h1v1h-1zM36 55h1v1h-1zM38 55h1v1h-1zM44 55h1v1h-1zM46 55h2v1h-2zM52 55h2v1h-2zM55 55h1v1h-1zM0 56h7v1h-7zM9 56h1v1h-1zM11 56h1v1h-1zM13 56h1v1h-1zM15 56h1v1h-1zM17 56h3v1h-3zM22 56h3v1h-3zM26 56h3v1h-3zM30 56h2v1h-2zM34 56h1v1h-1zM39 56h1v1h-1zM41 56h1v1h-1zM43 56h1v1h-1zM46 56h1v1h-1zM50 56h2v1h-2zM56 56h1v1h-1z"/></svg></div>
      <div class="c dt"><div>2025-07-03<br>10:56:34</div></div>
      <div class="c ac"><div class="eb">编辑</div><div class="db">删除</div></div>
    </div>
    <div class="row" style="top:339px;height:139px">
      <div class="c id">2451</div>
      <div class="c nm"><div>杭州爱玩者集合！加入<span class="l1">UPlus</span>友+城市聚会局，一起玩转这座城！<span class="l2"><span class="l3">?</span>? ? </span>你是不是想在杭州找<br>到更多有趣的朋友？<span class="l4"> ? </span>想要解</div></div>
      <div class="q"><svg viewBox="0 0 57 57"><path fill="#000" d="M0 0h7v1h-7zM8 0h1v1h-1zM12 0h4v1h-4zM17 0h1v1h-1zM19 0h3v1h-3zM24 0h3v1h-3zM34 0h1v1h-1zM39 0h5v1h-5zM50 0h7v1h-7zM0 1h1v1h-1zM6 1h1v1h-1zM9 1h1v1h-1zM11 1h3v1h-3zM15 1h2v1h-2zM18 1h2v1h-2zM21 1h5v1h-5zM28 1h1v1h-1zM31 1h2v1h-2zM36 1h2v1h-2zM41 1h1v1h-1zM43 1h1v1h-1zM45 1h1v1h-1zM50 1h1v1h-1zM56 1h1v1h-1zM0 2h1v1h-1zM2 2h3v1h-3zM6 2h1v1h-1zM8 2h1v1h-1zM12 2h1v1h-1zM14 2h3v1h-3zM18 2h3v1h-3zM24 2h5v1h-5zM30 2h3v1h-3zM34 2h3v1h-3zM38 2h2v1h-2zM45 2h2v1h-2zM50 2h1v1h-1zM52 2h3v1h-3zM56 2h1v1h-1zM0 3h1v1h-1zM2 3h3v1h-3zM6 3h1v1h-1zM9 3h1v1h-1zM12 3h1v1h-1zM14 3h8v1h-8zM24 3h1v1h-1zM26 3h1v1h-1zM29 3h4v1h-4zM34 3h1v1h-1zM36 3h7v1h-7zM45 3h1v1h-1zM47 3h1v1h-1zM50 3h1v1h-1zM52 3h3v1h-3zM56 3h1v1h-1zM0 4h1v1h-1zM2 4h3v1h-3zM6 4h1v1h-1zM8 4h1v1h-1zM11 4h3v1h-3zM15 4h1v1h-1zM17 4h2v1h-2zM20 4h1v1h-1zM26 4h6v1h-6zM36 4h2v1h-2zM41 4h1v1h-1zM43 4h4v1h-4zM48 4h1v1h-1zM50 4h1v1h-1zM52 4h3v1h-3zM56 4h1v1h-1zM0 5h1v1h-1zM6 5h1v1h-1zM12 5h1v1h-1zM16 5h1v1h-1zM18 5h2v1h-2zM22 5h1v1h-1zM24 5h3v1h-3zM30 5h4v1h-4zM35 5h1v1h-1zM38 5h1v1h-1zM42 5h2v1h-2zM46 5h2v1h-2zM50 5h1v1h-1zM56 5h1v1h-1zM0 6h7v1h-7zM8 6h1v1h-1zM10 6h1v1h-1zM12 6h1v1h-1zM14 6h1v1h-1zM16 6h1v1h-1zM18 6h1v1h-1zM20 6h1v1h-1zM22 6h1v1h-1zM24 6h1v1h-1zM26 6h1v1h-1zM28 6h1v1h-1zM30 6h1v1h-1zM32 6h1v1h-1zM34 6h1v1h-1zM36 6h1v1h-1zM38 6h1v1h-1zM40 6h1v1h-1zM42 6h1v1h-1zM44 6h1v1h-1zM46 6h1v1h-1zM48 6h1v1h-1zM50 6h7v1h-7zM8 7h1v1h-1zM10 7h1v1h-1zM12 7h2v1h-2zM15 7h1v1h-1zM20 7h1v1h-1zM23 7h1v1h-1zM25 7h2v1h-2zM30 7h1v1h-1zM32 7h1v1h-1zM34 7h2v1h-2zM38 7h1v1h-1zM41 7h1v1h-1zM43 7h2v1h-2zM46 7h3v1h-3zM1 8h1v1h-1zM4 8h1v1h-1zM6 8h1v1h-1zM14 8h2v1h-2zM18 8h1v1h-1zM24 8h1v1h-1zM26 8h5v1h-5zM33 8h1v1h-1zM35 8h1v1h-1zM37 8h1v1h-1zM41 8h2v1h-2zM44 8h1v1h-1zM48 8h2v1h-2zM52 8h5v1h-5zM1 9h1v1h-1zM3 9h2v1h-2zM7 9h8v1h-8zM16 9h2v1h-2zM25 9h2v1h-2zM31 9h1v1h-1zM33 9h4v1h-4zM40 9h1v1h-1zM42 9h1v1h-1zM44 9h1v1h-1zM47 9h1v1h-1zM49 9h5v1h-5zM56 9h1v1h-1zM1 10h4v1h-4zM6 10h3v1h-3zM11 10h4v1h-4zM16 10h2v1h-2zM19 10h2v1h-2zM23 10h1v1h-1zM35 10h2v1h-2zM38 10h3v1h-3zM42 10h1v1h-1zM47 10h1v1h-1zM55 10h2v1h-2zM0 11h1v1h-1zM3 11h2v1h-2zM7 11h1v1h-1zM9 11h1v1h-1zM11 11h1v1h-1zM13 11h2v1h-2zM18 11h2v1h-2zM21 11h1v1h-1zM24 11h1v1h-1zM26 11h1v1h-1zM28 11h1v1h-1zM31 11h1v1h-1zM35 11h1v1h-1zM38 11h3v1h-3zM43 11h2v1h-2zM46 11h1v1h-1zM50 11h1v1h-1zM53 11h1v1h-1zM55 11h1v1h-1zM4 12h4v1h-4zM9 12h1v1h-1zM11 12h1v1h-1zM13 12h2v1h-2zM20 12h1v1h-1zM23 12h3v1h-3zM30 12h1v1h-1zM33 12h1v1h-1zM35 12h3v1h-3zM39 12h3v1h-3zM44 12h1v1h-1zM46 12h3v1h-3zM52 12h1v1h-1zM55 12h2v1h-2zM0 13h1v1h-1zM2 13h2v1h-2zM5 13h1v1h-1zM7 13h1v1h-1zM9 13h2v1h-2zM14 13h1v1h-1zM17 13h1v1h-1zM19 13h1v1h-1zM22 13h1v1h-1zM24 13h1v1h-1zM31 13h1v1h-1zM33 13h1v1h-1zM36 13h1v1h-1zM38 13h3v1h-3zM42 13h3v1h-3zM48 13h2v1h-2zM51 13h2v1h-2zM55 13h1v1h-1zM0 14h3v1h-3zM6 14h2v1h-2zM9 14h1v1h-1zM11 14h2v1h-2zM16 14h1v1h-1zM19 14h2v1h-2zM22 14h3v1h-3zM29 14h1v1h-1zM31 14h1v1h-1zM34 14h1v1h-1zM36 14h2v1h-2zM39 14h2v1h-2zM42 14h2v1h-2zM46 14h1v1h-1zM48 14h5v1h-5zM54 14h2v1h-2zM0 15h1v1h-1zM3 15h3v1h-3zM7 15h4v1h-4zM13 15h2v1h-2zM16 15h1v1h-1zM20 15h1v1h-1zM22 15h1v1h-1zM25 15h2v1h-2zM31 15h1v1h-1zM33 15h1v1h-1zM35 15h1v1h-1zM38 15h1v1h-1zM41 15h5v1h-5zM48 15h3v1h-3zM52 15h5v1h-5zM0 16h1v1h-1zM3 16h2v1h-2zM6 16h3v1h-3zM10 16h8v1h-8zM19 16h4v1h-4zM26 16h1v1h-1zM28 16h3v1h-3zM32 16h1v1h-1zM34 16h2v1h-2zM38 16h1v1h-1zM42 16h1v1h-1zM45 16h2v1h-2zM52 16h4v1h-4zM1 17h3v1h-3zM8 17h2v1h-2zM11 17h1v1h-1zM13 17h1v1h-1zM19 17h1v1h-1zM22 17h2v1h-2zM25 17h2v1h-2zM28 17h1v1h-1zM30 17h2v1h-2zM33 17h2v1h-2zM38 17h2v1h-2zM42 17h1v1h-1zM44 17h2v1h-2zM52 17h2v1h-2zM55 17h1v1h-1zM0 18h1v1h-1zM2 18h1v1h-1zM5 18h3v1h-3zM9 18h4v1h-4zM14 18h1v1h-1zM18 18h3v1h-3zM25 18h1v1h-1zM29 18h1v1h-1zM31 18h1v1h-1zM33 18h1v1h-1zM35 18h8v1h-8zM45 18h1v1h-1zM47 18h2v1h-2zM50 18h2v1h-2zM0 19h2v1h-2zM5 19h1v1h-1zM7 19h1v1h-1zM12 19h3v1h-3zM20 19h3v1h-3zM28 19h3v1h-3zM32 19h2v1h-2zM35 19h1v1h-1zM37 19h2v1h-2zM45 19h3v1h-3zM52 19h2v1h-2zM55 19h1v1h-1zM1 20h2v1h-2zM6 20h1v1h-1zM10 20h1v1h-1zM12 20h1v1h-1zM16 20h2v1h-2zM19 20h5v1h-5zM25 20h1v1h-1zM29 20h3v1h-3zM33 20h2v1h-2zM38 20h2v1h-2zM42 20h1v1h-1zM46 20h5v1h-5zM52 20h1v1h-1zM54 20h1v1h-1zM56 20h1v1h-1zM4 21h2v1h-2zM7 21h2v1h-2zM10 21h1v1h-1zM16 21h1v1h-1zM18 21h1v1h-1zM20 21h1v1h-1zM22 21h1v1h-1zM29 21h1v1h-1zM31 21h4v1h-4zM37 21h1v1h-1zM40 21h1v1h-1zM43 21h1v1h-1zM45 21h1v1h-1zM49 21h3v1h-3zM53 21h1v1h-1zM55 21h2v1h-2zM3 22h2v1h-2zM6 22h3v1h-3zM10 22h1v1h-1zM17 22h1v1h-1zM19 22h2v1h-2zM22 22h1v1h-1zM25 22h1v1h-1zM27 22h1v1h-1zM29 22h1v1h-1zM31 22h2v1h-2zM34 22h1v1h-1zM36 22h3v1h-3zM44 22h3v1h-3zM49 22h2v1h-2zM53 22h1v1h-1zM55 22h1v1h-1zM0 23h1v1h-1zM2 23h1v1h-1zM4 23h1v1h-1zM11 23h2v1h-2zM15 23h1v1h-1zM17 23h1v1h-1zM21 23h3v1h-3zM30 23h1v1h-1zM35 23h3v1h-3zM39 23h2v1h-2zM44 23h1v1h-1zM50 23h1v1h-1zM52 23h1v1h-1zM54 23h1v1h-1zM56 23h1v1h-1zM0 24h1v1h-1zM2 24h1v1h-1zM4 24h4v1h-4zM10 24h1v1h-1zM12 24h3v1h-3zM18 24h1v1h-1zM21 24h3v1h-3zM26 24h4v1h-4zM33 24h1v1h-1zM35 24h3v1h-3zM41 24h1v1h-1zM45 24h2v1h-2zM48 24h1v1h-1zM50 24h1v1h-1zM53 24h2v1h-2zM56 24h1v1h-1zM2 25h2v1h-2zM5 25h1v1h-1zM7 25h1v1h-1zM10 25h2v1h-2zM13 25h1v1h-1zM15 25h3v1h-3zM23 25h5v1h-5zM29 25h4v1h-4zM34 25h1v1h-1zM38 25h1v1h-1zM45 25h1v1h-1zM48 25h1v1h-1zM54 25h3v1h-3zM4 26h6v1h-6zM12 26h1v1h-1zM14 26h1v1h-1zM21 26h1v1h-1zM24 26h8v1h-8zM33 26h1v1h-1zM35 26h1v1h-1zM37 26h1v1h-1zM41 26h2v1h-2zM44 26h1v1h-1zM48 26h5v1h-5zM0 27h5v1h-5zM8 27h1v1h-1zM10 27h3v1h-3zM15 27h1v1h-1zM17 27h2v1h-2zM21 27h2v1h-2zM24 27h3v1h-3zM30 27h2v1h-2zM33 27h2v1h-2zM37 27h2v1h-2zM43 27h3v1h-3zM47 27h2v1h-2zM52 27h1v1h-1zM55 27h1v1h-1zM0 28h1v1h-1zM2 28h1v1h-1zM4 28h1v1h-1zM6 28h1v1h-1zM8 28h2v1h-2zM16 28h2v1h-2zM19 28h2v1h-2zM22 28h2v1h-2zM25 28h2v1h-2zM28 28h1v1h-1zM30 28h2v1h-2zM33 28h1v1h-1zM35 28h3v1h-3zM41 28h1v1h-1zM43 28h3v1h-3zM48 28h1v1h-1zM50 28h1v1h-1zM52 28h2v1h-2zM55 28h1v1h-1zM1 29h1v1h-1zM3 29h2v1h-2zM8 29h1v1h-1zM11 29h4v1h-4zM18 29h1v1h-1zM26 29h1v1h-1zM30 29h2v1h-2zM33 29h1v1h-1zM36 29h1v1h-1zM40 29h1v1h-1zM43 29h1v1h-1zM45 29h1v1h-1zM48 29h1v1h-1zM52 29h2v1h-2zM55 29h1v1h-1zM0 30h1v1h-1zM4 30h5v1h-5zM10 30h1v1h-1zM13 30h1v1h-1zM18 30h1v1h-1zM21 30h1v1h-1zM24 30h1v1h-1zM26 30h5v1h-5zM35 30h1v1h-1zM37 30h1v1h-1zM40 30h1v1h-1zM44 30h1v1h-1zM47 30h9v1h-9zM0 31h1v1h-1zM2 31h3v1h-3zM7 31h2v1h-2zM11 31h3v1h-3zM16 31h1v1h-1zM18 31h1v1h-1zM20 31h1v1h-1zM22 31h1v1h-1zM26 31h1v1h-1zM30 31h3v1h-3zM34 31h1v1h-1zM36 31h3v1h-3zM40 31h1v1h-1zM45 31h3v1h-3zM49 31h1v1h-1zM51 31h1v1h-1zM53 31h2v1h-2zM0 32h7v1h-7zM8 32h4v1h-4zM13 32h1v1h-1zM15 32h3v1h-3zM19 32h3v1h-3zM23 32h1v1h-1zM25 32h1v1h-1zM27 32h2v1h-2zM34 32h1v1h-1zM36 32h2v1h-2zM41 32h1v1h-1zM44 32h1v1h-1zM53 32h1v1h-1zM55 32h1v1h-1zM0 33h4v1h-4zM5 33h1v1h-1zM8 33h2v1h-2zM11 33h1v1h-1zM14 33h2v1h-2zM19 33h2v1h-2zM25 33h1v1h-1zM28 33h1v1h-1zM30 33h1v1h-1zM33 33h2v1h-2zM37 33h1v1h-1zM39 33h1v1h-1zM42 33h1v1h-1zM45 33h1v1h-1zM51 33h4v1h-4zM4 34h1v1h-1zM6 34h2v1h-2zM10 34h1v1h-1zM12 34h2v1h-2zM18 34h1v1h-1zM22 34h1v1h-1zM25 34h1v1h-1zM30 34h1v1h-1zM32 34h1v1h-1zM34 34h2v1h-2zM37 34h2v1h-2zM42 34h2v1h-2zM46 34h2v1h-2zM50 34h1v1h-1zM54 34h3v1h-3zM0 35h1v1h-1zM5 35h1v1h-1zM10 35h1v1h-1zM12 35h2v1h-2zM15 35h3v1h-3zM19 35h2v1h-2zM22 35h1v1h-1zM25 35h1v1h-1zM27 35h1v1h-1zM31 35h3v1h-3zM35 35h1v1h-1zM39 35h1v1h-1zM41 35h2v1h-2zM44 35h2v1h-2zM47 35h1v1h-1zM50 35h1v1h-1zM52 35h2v1h-2zM2 36h1v1h-1zM5 36h3v1h-3zM10 36h2v1h-2zM13 36h1v1h-1zM16 36h5v1h-5zM25 36h1v1h-1zM28 36h3v1h-3zM33 36h1v1h-1zM38 36h1v1h-1zM40 36h1v1h-1zM44 36h1v1h-1zM46 36h3v1h-3zM53 36h1v1h-1zM55 36h2v1h-2zM1 37h4v1h-4zM7 37h1v1h-1zM9 37h1v1h-1zM11 37h1v1h-1zM16 37h1v1h-1zM18 37h1v1h-1zM24 37h1v1h-1zM26 37h1v1h-1zM29 37h2v1h-2zM33 37h3v1h-3zM37 37h2v1h-2zM41 37h1v1h-1zM43 37h5v1h-5zM49 37h1v1h-1zM52 37h2v1h-2zM1 38h1v1h-1zM4 38h6v1h-6zM14 38h2v1h-2zM18 38h2v1h-2zM21 38h1v1h-1zM24 38h1v1h-1zM26 38h2v1h-2zM29 38h2v1h-2zM35 38h1v1h-1zM39 38h2v1h-2zM43 38h1v1h-1zM47 38h1v1h-1zM49 38h1v1h-1zM53 38h1v1h-1zM55 38h2v1h-2zM0 39h1v1h-1zM7 39h1v1h-1zM9 39h2v1h-2zM12 39h1v1h-1zM14 39h1v1h-1zM19 39h8v1h-8zM28 39h2v1h-2zM32 39h1v1h-1zM35 39h3v1h-3zM44 39h3v1h-3zM48 39h1v1h-1zM50 39h1v1h-1zM52 39h2v1h-2zM55 39h2v1h-2zM2 40h2v1h-2zM5 40h2v1h-2zM8 40h2v1h-2zM11 40h1v1h-1zM13 40h1v1h-1zM18 40h3v1h-3zM22 40h2v1h-2zM30 40h1v1h-1zM32 40h3v1h-3zM36 40h3v1h-3zM40 40h2v1h-2zM44 40h1v1h-1zM47 40h1v1h-1zM50 40h2v1h-2zM54 40h1v1h-1zM56 40h1v1h-1zM0 41h2v1h-2zM5 41h1v1h-1zM7 41h3v1h-3zM11 41h2v1h-2zM15 41h4v1h-4zM20 41h2v1h-2zM25 41h1v1h-1zM32 41h1v1h-1zM38 41h1v1h-1zM44 41h1v1h-1zM49 41h1v1h-1zM55 41h2v1h-2zM3 42h4v1h-4zM8 42h4v1h-4zM15 42h1v1h-1zM20 42h1v1h-1zM25 42h1v1h-1zM27 42h6v1h-6zM34 42h4v1h-4zM39 42h1v1h-1zM41 42h1v1h-1zM48 42h3v1h-3zM56 42h1v1h-1zM5 43h1v1h-1zM11 43h2v1h-2zM14 43h2v1h-2zM17 43h1v1h-1zM19 43h2v1h-2zM22 43h1v1h-1zM24 43h2v1h-2zM29 43h2v1h-2zM34 43h1v1h-1zM36 43h2v1h-2zM40 43h1v1h-1zM43 43h1v1h-1zM46 43h2v1h-2zM49 43h1v1h-1zM56 43h1v1h-1zM5 44h2v1h-2zM8 44h1v1h-1zM13 44h1v1h-1zM16 44h3v1h-3zM20 44h1v1h-1zM28 44h1v1h-1zM32 44h1v1h-1zM36 44h2v1h-2zM43 44h2v1h-2zM47 44h1v1h-1zM51 44h1v1h-1zM2 45h3v1h-3zM8 45h1v1h-1zM11 45h2v1h-2zM14 45h4v1h-4zM19 45h1v1h-1zM21 45h2v1h-2zM24 45h5v1h-5zM30 45h2v1h-2zM33 45h2v1h-2zM36 45h3v1h-3zM41 45h1v1h-1zM46 45h1v1h-1zM48 45h2v1h-2zM51 45h5v1h-5zM0 46h1v1h-1zM3 46h4v1h-4zM8 46h5v1h-5zM14 46h1v1h-1zM18 46h1v1h-1zM20 46h2v1h-2zM23 46h2v1h-2zM26 46h1v1h-1zM29 46h3v1h-3zM35 46h1v1h-1zM38 46h2v1h-2zM43 46h5v1h-5zM49 46h1v1h-1zM52 46h2v1h-2zM56 46h1v1h-1zM1 47h1v1h-1zM5 47h1v1h-1zM7 47h1v1h-1zM9 47h2v1h-2zM13 47h1v1h-1zM16 47h2v1h-2zM22 47h1v1h-1zM25 47h5v1h-5zM31 47h1v1h-1zM33 47h1v1h-1zM35 47h4v1h-4zM41 47h1v1h-1zM43 47h1v1h-1zM45 47h8v1h-8zM54 47h2v1h-2zM1 48h3v1h-3zM6 48h3v1h-3zM15 48h4v1h-4zM20 48h1v1h-1zM22 48h1v1h-1zM26 48h7v1h-7zM34 48h2v1h-2zM38 48h1v1h-1zM42 48h2v1h-2zM46 48h1v1h-1zM48 48h9v1h-9zM10 49h1v1h-1zM12 49h1v1h-1zM15 49h3v1h-3zM19 49h1v1h-1zM22 49h3v1h-3zM26 49h1v1h-1zM30 49h1v1h-1zM33 49h2v1h-2zM37 49h4v1h-4zM42 49h2v1h-2zM45 49h4v1h-4zM52 49h1v1h-1zM54 49h3v1h-3zM0 50h7v1h-7zM9 50h2v1h-2zM12 50h5v1h-5zM18 50h1v1h-1zM20 50h1v1h-1zM22 50h1v1h-1zM26 50h1v1h-1zM28 50h1v1h-1zM30 50h1v1h-1zM32 50h2v1h-2zM35 50h1v1h-1zM38 50h3v1h-3zM42 50h1v1h-1zM44 50h2v1h-2zM48 50h1v1h-1zM50 50h1v1h-1zM52 50h2v1h-2zM0 51h1v1h-1zM6 51h1v1h-1zM8 51h1v1h-1zM10 51h2v1h-2zM14 51h1v1h-1zM16 51h1v1h-1zM18 51h6v1h-6zM25 51h2v1h-2zM30 51h1v1h-1zM33 51h2v1h-2zM43 51h3v1h-3zM48 51h1v1h-1zM52 51h1v1h-1zM54 51h2v1h-2zM0 52h1v1h-1zM2 52h3v1h-3zM6 52h1v1h-1zM9 52h1v1h-1zM12 52h3v1h-3zM18 52h1v1h-1zM21 52h1v1h-1zM25 52h7v1h-7zM35 52h1v1h-1zM39 52h1v1h-1zM42 52h1v1h-1zM48 52h5v1h-5zM56 52h1v1h-1zM0 53h1v1h-1zM2 53h3v1h-3zM6 53h1v1h-1zM8 53h1v1h-1zM10 53h3v1h-3zM14 53h2v1h-2zM18 53h5v1h-5zM24 53h5v1h-5zM34 53h1v1h-1zM39 53h5v1h-5zM46 53h1v1h-1zM48 53h1v1h-1zM50 53h6v1h-6zM0 54h1v1h-1zM2 54h3v1h-3zM6 54h1v1h-1zM9 54h1v1h-1zM11 54h2v1h-2zM15 54h1v1h-1zM17 54h4v1h-4zM23 54h1v1h-1zM26 54h1v1h-1zM28 54h1v1h-1zM30 54h1v1h-1zM34 54h4v1h-4zM41 54h1v1h-1zM45 54h1v1h-1zM47 54h1v1h-1zM50 54h1v1h-1zM54 54h2v1h-2zM0 55h1v1h-1zM6 55h1v1h-1zM8 55h1v1h-1zM11 55h1v1h-1zM17 55h1v1h-1zM19 55h2v1h-2zM25 55h3v1h-3zM30 55h1v1h-1zM32 55h1v1h-1zM39 55h5v1h-5zM45 55h4v1h-4zM50 55h2v1h-2zM55 55h2v1h-2zM0 56h7v1h-7zM8 56h2v1h-2zM11 56h2v1h-2zM14 56h2v1h-2zM18 56h5v1h-5zM26 56h3v1h-3zM33 56h1v1h-1zM35 56h1v1h-1zM38 56h3v1h-3zM43 56h1v1h-1zM45 56h2v1h-2zM49 56h1v1h-1zM54 56h3v1h-3z"/></svg></div>
      <div class="c dt"><div>2025-07-03<br>10:56:34</div></div>
      <div class="c ac"><div class="eb">编辑</div><div class="db">删除</div></div>
    </div>
    <div class="row" style="top:478px;height:140px">
      <div class="c id">2450</div>
      <div class="c nm"><div>杭州同城交友群 周末一起爬山露营 欢迎加入</div></div>
      <div class="q"><svg viewBox="0 0 57 57"><path fill="#000" d="M0 0h7v1h-7zM8 0h1v1h-1zM12 0h2v1h-2zM16 0h1v1h-1zM18 0h1v1h-1zM20 0h2v1h-2zM23 0h2v1h-2zM27 0h1v1h-1zM30 0h1v1h-1zM32 0h4v1h-4zM37 0h1v1h-1zM39 0h1v1h-1zM43 0h1v1h-1zM46 0h2v1h-2zM50 0h7v1h-7zM0 1h1v1h-1zM6 1h1v1h-1zM9 1h3v1h-3zM14 1h1v1h-1zM16 1h3v1h-3zM20 1h1v1h-1zM22 1h1v1h-1zM26 1h1v1h-1zM28 1h1v1h-1zM30 1h1v1h-1zM32 1h1v1h-1zM35 1h2v1h-2zM39 1h1v1h-1zM42 1h2v1h-2zM46 1h3v1h-3zM50 1h1v1h-1zM56 1h1v1h-1zM0 2h1v1h-1zM2 2h3v1h-3zM6 2h1v1h-1zM9 2h5v1h-5zM16 2h1v1h-1zM18 2h6v1h-6zM25 2h2v1h-2zM29 2h1v1h-1zM31 2h1v1h-1zM38 2h2v1h-2zM43 2h1v1h-1zM46 2h1v1h-1zM48 2h1v1h-1zM50 2h1v1h-1zM52 2h3v1h-3zM56 2h1v1h-1zM0 3h1v1h-1zM2 3h3v1h-3zM6 3h1v1h-1zM8 3h4v1h-4zM13 3h3v1h-3zM17 3h1v1h-1zM19 3h6v1h-6zM26 3h1v1h-1zM28 3h1v1h-1zM31 3h1v1h-1zM35 3h4v1h-4zM41 3h1v1h-1zM45 3h1v1h-1zM47 3h1v1h-1zM50 3h1v1h-1zM52 3h3v1h-3zM56 3h1v1h-1zM0 4h1v1h-1zM2 4h3v1h-3zM6 4h1v1h-1zM11 4h1v1h-1zM13 4h3v1h-3zM17 4h2v1h-2zM22 4h1v1h-1zM24 4h1v1h-1zM26 4h5v1h-5zM32 4h1v1h-1zM34 4h1v1h-1zM39 4h3v1h-3zM43 4h2v1h-2zM50 4h1v1h-1zM52 4h3v1h-3zM56 4h1v1h-1zM0 5h1v1h-1zM6 5h1v1h-1zM10 5h1v1h-1zM12 5h2v1h-2zM16 5h1v1h-1zM19 5h3v1h-3zM24 5h1v1h-1zM26 5h1v1h-1zM30 5h5v1h-5zM36 5h2v1h-2zM40 5h1v1h-1zM45 5h2v1h-2zM50 5h1v1h-1zM56 5h1v1h-1zM0 6h7v1h-7zM8 6h1v1h-1zM10 6h1v1h-1zM12 6h1v1h-1zM14 6h1v1h-1zM16 6h1v1h-1zM18 6h1v1h-1zM20 6h1v1h-1zM22 6h1v1h-1zM24 6h1v1h-1zM26 6h1v1h-1zM28 6h1v1h-1zM30 6h1v1h-1zM32 6h1v1h-1zM34 6h1v1h-1zM36 6h1v1h-1zM38 6h1v1h-1zM40 6h1v1h-1zM42 6h1v1h-1zM44 6h1v1h-1zM46 6h1v1h-1zM48 6h1v1h-1zM50 6h7v1h-7zM9 7h2v1h-2zM12 7h1v1h-1zM16 7h1v1h-1zM19 7h2v1h-2zM22 7h1v1h-1zM24 7h1v1h-1zM26 7h1v1h-1zM30 7h1v1h-1zM32 7h1v1h-1zM37 7h1v1h-1zM39 7h1v1h-1zM41 7h1v1h-1zM43 7h2v1h-2zM47 7h2v1h-2zM2 8h2v1h-2zM6 8h2v1h-2zM10 8h3v1h-3zM14 8h2v1h-2zM17 8h1v1h-1zM19 8h2v1h-2zM22 8h1v1h-1zM24 8h1v1h-1zM26 8h5v1h-5zM32 8h1v1h-1zM35 8h1v1h-1zM37 8h1v1h-1zM40 8h1v1h-1zM42 8h1v1h-1zM46 8h1v1h-1zM48 8h1v1h-1zM50 8h1v1h-1zM52 8h1v1h-1zM55 8h2v1h-2zM2 9h1v1h-1zM4 9h2v1h-2zM7 9h1v1h-1zM11 9h7v1h-7zM22 9h2v1h-2zM25 9h2v1h-2zM32 9h1v1h-1zM36 9h4v1h-4zM41 9h2v1h-2zM44 9h5v1h-5zM51 9h1v1h-1zM54 9h1v1h-1zM56 9h1v1h-1zM2 10h1v1h-1zM4 10h1v1h-1zM6 10h1v1h-1zM8 10h3v1h-3zM12 10h1v1h-1zM20 10h2v1h-2zM23 10h1v1h-1zM25 10h4v1h-4zM31 10h3v1h-3zM35 10h2v1h-2zM38 10h4v1h-4zM43 10h1v1h-1zM53 10h2v1h-2zM1 11h3v1h-3zM5 11h1v1h-1zM12 11h1v1h-1zM14 11h2v1h-2zM20 11h3v1h-3zM24 11h2v1h-2zM27 11h1v1h-1zM29 11h2v1h-2zM32 11h3v1h-3zM36 11h1v1h-1zM41 11h1v1h-1zM43 11h1v1h-1zM45 11h3v1h-3zM49 11h1v1h-1zM51 11h3v1h-3zM0 12h2v1h-2zM5 12h2v1h-2zM13 12h1v1h-1zM15 12h1v1h-1zM17 12h2v1h-2zM21 12h1v1h-1zM24 12h1v1h-1zM26 12h2v1h-2zM31 12h4v1h-4zM39 12h5v1h-5zM46 12h1v1h-1zM48 12h1v1h-1zM1 13h1v1h-1zM5 13h1v1h-1zM8 13h2v1h-2zM11 13h1v1h-1zM13 13h1v1h-1zM15 13h2v1h-2zM18 13h1v1h-1zM20 13h3v1h-3zM24 13h1v1h-1zM28 13h1v1h-1zM30 13h1v1h-1zM33 13h1v1h-1zM36 13h2v1h-2zM39 13h2v1h-2zM43 13h2v1h-2zM47 13h1v1h-1zM50 13h2v1h-2zM53 13h1v1h-1zM56 13h1v1h-1zM0 14h4v1h-4zM6 14h1v1h-1zM9 14h1v1h-1zM11 14h1v1h-1zM15 14h1v1h-1zM17 14h1v1h-1zM19 14h1v1h-1zM21 14h3v1h-3zM26 14h1v1h-1zM28 14h1v1h-1zM30 14h3v1h-3zM34 14h1v1h-1zM39 14h1v1h-1zM41 14h3v1h-3zM47 14h1v1h-1zM49 14h1v1h-1zM53 14h4v1h-4zM1 15h1v1h-1zM3 15h3v1h-3zM10 15h4v1h-4zM16 15h3v1h-3zM20 15h2v1h-2zM23 15h1v1h-1zM26 15h1v1h-1zM30 15h3v1h-3zM35 15h1v1h-1zM37 15h1v1h-1zM41 15h7v1h-7zM49 15h5v1h-5zM0 16h1v1h-1zM3 16h1v1h-1zM5 16h2v1h-2zM9 16h2v1h-2zM13 16h1v1h-1zM15 16h1v1h-1zM19 16h1v1h-1zM21 16h4v1h-4zM26 16h1v1h-1zM29 16h1v1h-1zM32 16h1v1h-1zM34 16h3v1h-3zM38 16h4v1h-4zM43 16h3v1h-3zM47 16h1v1h-1zM50 16h2v1h-2zM54 16h1v1h-1zM0 17h1v1h-1zM2 17h1v1h-1zM4 17h1v1h-1zM7 17h3v1h-3zM12 17h4v1h-4zM18 17h5v1h-5zM24 17h1v1h-1zM28 17h1v1h-1zM31 17h1v1h-1zM33 17h3v1h-3zM37 17h1v1h-1zM43 17h3v1h-3zM47 17h1v1h-1zM49 17h2v1h-2zM52 17h1v1h-1zM0 18h1v1h-1zM2 18h1v1h-1zM5 18h2v1h-2zM10 18h1v1h-1zM14 18h3v1h-3zM18 18h1v1h-1zM22 18h1v1h-1zM24 18h2v1h-2zM27 18h1v1h-1zM32 18h1v1h-1zM34 18h3v1h-3zM39 18h1v1h-1zM42 18h1v1h-1zM46 18h1v1h-1zM48 18h3v1h-3zM0 19h1v1h-1zM3 19h2v1h-2zM8 19h2v1h-2zM15 19h1v1h-1zM17 19h1v1h-1zM19 19h1v1h-1zM21 19h2v1h-2zM29 19h2v1h-2zM32 19h2v1h-2zM36 19h1v1h-1zM38 19h1v1h-1zM42 19h1v1h-1zM44 19h1v1h-1zM48 19h7v1h-7zM0 20h3v1h-3zM4 20h1v1h-1zM6 20h2v1h-2zM9 20h1v1h-1zM11 20h1v1h-1zM13 20h1v1h-1zM16 20h4v1h-4zM21 20h2v1h-2zM24 20h2v1h-2zM27 20h1v1h-1zM29 20h1v1h-1zM31 20h2v1h-2zM38 20h5v1h-5zM44 20h2v1h-2zM48 20h1v1h-1zM50 20h1v1h-1zM53 20h1v1h-1zM0 21h2v1h-2zM4 21h2v1h-2zM7 21h2v1h-2zM10 21h2v1h-2zM21 21h1v1h-1zM25 21h1v1h-1zM28 21h3v1h-3zM33 21h1v1h-1zM35 21h1v1h-1zM39 21h8v1h-8zM49 21h2v1h-2zM2 22h2v1h-2zM6 22h1v1h-1zM8 22h2v1h-2zM13 22h2v1h-2zM19 22h1v1h-1zM22 22h1v1h-1zM24 22h2v1h-2zM27 22h1v1h-1zM30 22h3v1h-3zM34 22h1v1h-1zM37 22h1v1h-1zM39 22h2v1h-2zM42 22h2v1h-2zM46 22h1v1h-1zM49 22h1v1h-1zM51 22h4v1h-4zM56 22h1v1h-1zM1 23h2v1h-2zM10 23h2v1h-2zM14 23h2v1h-2zM19 23h2v1h-2zM26 23h4v1h-4zM31 23h1v1h-1zM33 23h2v1h-2zM36 23h1v1h-1zM40 23h2v1h-2zM44 23h1v1h-1zM46 23h1v1h-1zM48 23h1v1h-1zM1 24h2v1h-2zM5 24h6v1h-6zM12 24h5v1h-5zM18 24h3v1h-3zM23 24h1v1h-1zM25 24h2v1h-2zM31 24h2v1h-2zM35 24h3v1h-3zM39 24h1v1h-1zM43 24h1v1h-1zM45 24h2v1h-2zM48 24h1v1h-1zM51 24h2v1h-2zM56 24h1v1h-1zM3 25h3v1h-3zM7 25h1v1h-1zM9 25h2v1h-2zM13 25h8v1h-8zM22 25h6v1h-6zM30 25h1v1h-1zM32 25h3v1h-3zM36 25h1v1h-1zM41 25h3v1h-3zM46 25h1v1h-1zM48 25h7v1h-7zM1 26h9v1h-9zM11 26h1v1h-1zM13 26h1v1h-1zM15 26h4v1h-4zM21 26h1v1h-1zM25 26h6v1h-6zM32 26h1v1h-1zM37 26h3v1h-3zM41 26h1v1h-1zM43 26h2v1h-2zM47 26h6v1h-6zM55 26h2v1h-2zM0 27h5v1h-5zM8 27h1v1h-1zM10 27h3v1h-3zM14 27h2v1h-2zM18 27h1v1h-1zM20 27h3v1h-3zM25 27h2v1h-2zM30 27h3v1h-3zM38 27h2v1h-2zM43 27h2v1h-2zM46 27h1v1h-1zM48 27h1v1h-1zM52 27h4v1h-4zM0 28h5v1h-5zM6 28h1v1h-1zM8 28h2v1h-2zM11 28h3v1h-3zM15 28h1v1h-1zM17 28h1v1h-1zM19 28h1v1h-1zM21 28h1v1h-1zM23 28h4v1h-4zM28 28h1v1h-1zM30 28h2v1h-2zM33 28h3v1h-3zM38 28h1v1h-1zM44 28h2v1h-2zM47 28h2v1h-2zM50 28h1v1h-1zM52 28h3v1h-3zM56 28h1v1h-1zM0 29h2v1h-2zM4 29h1v1h-1zM8 29h4v1h-4zM21 29h2v1h-2zM24 29h3v1h-3zM30 29h2v1h-2zM34 29h5v1h-5zM41 29h1v1h-1zM45 29h1v1h-1zM47 29h2v1h-2zM52 29h1v1h-1zM54 29h1v1h-1zM4 30h5v1h-5zM10 30h1v1h-1zM13 30h2v1h-2zM16 30h2v1h-2zM20 30h1v1h-1zM23 30h1v1h-1zM25 30h6v1h-6zM32 30h1v1h-1zM34 30h4v1h-4zM40 30h1v1h-1zM48 30h9v1h-9zM0 31h3v1h-3zM5 31h1v1h-1zM8 31h2v1h-2zM13 31h1v1h-1zM15 31h1v1h-1zM17 31h2v1h-2zM23 31h1v1h-1zM25 31h2v1h-2zM29 31h2v1h-2zM35 31h1v1h-1zM38 31h1v1h-1zM40 31h1v1h-1zM44 31h3v1h-3zM51 31h1v1h-1zM55 31h1v1h-1zM5 32h6v1h-6zM12 32h2v1h-2zM16 32h4v1h-4zM23 32h1v1h-1zM26 32h1v1h-1zM29 32h1v1h-1zM31 32h1v1h-1zM33 32h1v1h-1zM40 32h1v1h-1zM43 32h3v1h-3zM49 32h1v1h-1zM51 32h2v1h-2zM54 32h2v1h-2zM2 33h4v1h-4zM8 33h2v1h-2zM12 33h2v1h-2zM17 33h4v1h-4zM22 33h4v1h-4zM27 33h2v1h-2zM30 33h1v1h-1zM33 33h3v1h-3zM37 33h1v1h-1zM41 33h1v1h-1zM45 33h1v1h-1zM47 33h1v1h-1zM50 33h2v1h-2zM54 33h2v1h-2zM0 34h1v1h-1zM4 34h1v1h-1zM6 34h1v1h-1zM10 34h1v1h-1zM12 34h1v1h-1zM15 34h1v1h-1zM17 34h1v1h-1zM19 34h3v1h-3zM23 34h3v1h-3zM27 34h2v1h-2zM37 34h2v1h-2zM43 34h1v1h-1zM45 34h1v1h-1zM48 34h2v1h-2zM51 34h1v1h-1zM55 34h2v1h-2zM2 35h3v1h-3zM7 35h2v1h-2zM11 35h2v1h-2zM17 35h1v1h-1zM19 35h1v1h-1zM25 35h2v1h-2zM35 35h1v1h-1zM40 35h1v1h-1zM42 35h2v1h-2zM45 35h1v1h-1zM49 35h3v1h-3zM54 35h1v1h-1zM3 36h4v1h-4zM8 36h1v1h-1zM11 36h2v1h-2zM14 36h2v1h-2zM17 36h3v1h-3zM21 36h3v1h-3zM26 36h2v1h-2zM29 36h4v1h-4zM34 36h3v1h-3zM40 36h4v1h-4zM47 36h10v1h-10zM0 37h3v1h-3zM7 37h2v1h-2zM11 37h3v1h-3zM16 37h1v1h-1zM19 37h1v1h-1zM23 37h4v1h-4zM29 37h3v1h-3zM34 37h2v1h-2zM40 37h1v1h-1zM42 37h3v1h-3zM46 37h1v1h-1zM49 37h1v1h-1zM52 37h3v1h-3zM56 37h1v1h-1zM0 38h1v1h-1zM4 38h5v1h-5zM11 38h1v1h-1zM14 38h2v1h-2zM19 38h1v1h-1zM24 38h2v1h-2zM28 38h2v1h-2zM31 38h1v1h-1zM34 38h5v1h-5zM40 38h1v1h-1zM42 38h1v1h-1zM50 38h2v1h-2zM54 38h1v1h-1zM56 38h1v1h-1zM0 39h1v1h-1zM2 39h1v1h-1zM4 39h1v1h-1zM7 39h3v1h-3zM12 39h1v1h-1zM14 39h2v1h-2zM17 39h1v1h-1zM21 39h3v1h-3zM25 39h4v1h-4zM32 39h3v1h-3zM36 39h1v1h-1zM38 39h2v1h-2zM42 39h2v1h-2zM46 39h2v1h-2zM50 39h1v1h-1zM52 39h1v1h-1zM54 39h2v1h-2zM1 40h1v1h-1zM3 40h5v1h-5zM11 40h1v1h-1zM14 40h2v1h-2zM18 40h2v1h-2zM22 40h2v1h-2zM27 40h1v1h-1zM30 40h4v1h-4zM36 40h3v1h-3zM40 40h1v1h-1zM43 40h1v1h-1zM45 40h1v1h-1zM47 40h2v1h-2zM52 40h1v1h-1zM54 40h2v1h-2zM2 41h1v1h-1zM4 41h2v1h-2zM9 41h1v1h-1zM11 41h4v1h-4zM17 41h4v1h-4zM23 41h1v1h-1zM28 41h2v1h-2zM31 41h1v1h-1zM34 41h1v1h-1zM36 41h2v1h-2zM39 41h1v1h-1zM41 41h1v1h-1zM44 41h2v1h-2zM47 41h1v1h-1zM51 41h1v1h-1zM55 41h1v1h-1zM1 42h3v1h-3zM6 42h3v1h-3zM12 42h2v1h-2zM15 42h2v1h-2zM18 42h1v1h-1zM20 42h2v1h-2zM25 42h1v1h-1zM32 42h1v1h-1zM34 42h4v1h-4zM40 42h1v1h-1zM43 42h1v1h-1zM47 42h2v1h-2zM54 42h2v1h-2zM4 43h2v1h-2zM7 43h3v1h-3zM11 43h3v1h-3zM18 43h2v1h-2zM21 43h2v1h-2zM25 43h1v1h-1zM27 43h1v1h-1zM31 43h3v1h-3zM38 43h1v1h-1zM40 43h1v1h-1zM42 43h1v1h-1zM44 43h2v1h-2zM48 43h9v1h-9zM0 44h2v1h-2zM6 44h2v1h-2zM9 44h1v1h-1zM13 44h2v1h-2zM17 44h1v1h-1zM19 44h6v1h-6zM26 44h1v1h-1zM33 44h2v1h-2zM37 44h2v1h-2zM41 44h1v1h-1zM44 44h2v1h-2zM47 44h1v1h-1zM56 44h1v1h-1zM2 45h1v1h-1zM8 45h1v1h-1zM15 45h1v1h-1zM17 45h2v1h-2zM21 45h1v1h-1zM23 45h1v1h-1zM26 45h2v1h-2zM29 45h4v1h-4zM34 45h1v1h-1zM36 45h1v1h-1zM39 45h1v1h-1zM41 45h1v1h-1zM43 45h3v1h-3zM48 45h1v1h-1zM50 45h2v1h-2zM55 45h1v1h-1zM1 46h1v1h-1zM3 46h2v1h-2zM6 46h2v1h-2zM10 46h1v1h-1zM12 46h1v1h-1zM14 46h2v1h-2zM17 46h1v1h-1zM20 46h2v1h-2zM23 46h2v1h-2zM26 46h1v1h-1zM28 46h2v1h-2zM32 46h1v1h-1zM35 46h1v1h-1zM37 46h1v1h-1zM40 46h1v1h-1zM42 46h2v1h-2zM51 46h1v1h-1zM54 46h1v1h-1zM56 46h1v1h-1zM1 47h1v1h-1zM4 47h2v1h-2zM10 47h2v1h-2zM14 47h1v1h-1zM16 47h2v1h-2zM20 47h4v1h-4zM26 47h3v1h-3zM32 47h1v1h-1zM35 47h1v1h-1zM38 47h2v1h-2zM43 47h1v1h-1zM49 47h1v1h-1zM51 47h2v1h-2zM0 48h2v1h-2zM4 48h3v1h-3zM8 48h2v1h-2zM15 48h1v1h-1zM23 48h2v1h-2zM26 48h5v1h-5zM33 48h4v1h-4zM42 48h11v1h-11zM56 48h1v1h-1zM10 49h1v1h-1zM12 49h2v1h-2zM16 49h1v1h-1zM26 49h1v1h-1zM30 49h2v1h-2zM33 49h1v1h-1zM35 49h2v1h-2zM39 49h2v1h-2zM42 49h4v1h-4zM48 49h1v1h-1zM52 49h1v1h-1zM55 49h2v1h-2zM0 50h7v1h-7zM12 50h4v1h-4zM21 50h1v1h-1zM23 50h1v1h-1zM26 50h1v1h-1zM28 50h1v1h-1zM30 50h1v1h-1zM32 50h1v1h-1zM34 50h2v1h-2zM38 50h1v1h-1zM42 50h3v1h-3zM46 50h3v1h-3zM50 50h1v1h-1zM52 50h5v1h-5zM0 51h1v1h-1zM6 51h1v1h-1zM12 51h3v1h-3zM18 51h1v1h-1zM22 51h3v1h-3zM26 51h1v1h-1zM30 51h2v1h-2zM34 51h1v1h-1zM38 51h3v1h-3zM42 51h1v1h-1zM45 51h1v1h-1zM47 51h2v1h-2zM52 51h1v1h-1zM55 51h1v1h-1zM0 52h1v1h-1zM2 52h3v1h-3zM6 52h1v1h-1zM8 52h1v1h-1zM10 52h2v1h-2zM14 52h2v1h-2zM18 52h1v1h-1zM22 52h1v1h-1zM26 52h7v1h-7zM34 52h1v1h-1zM39 52h2v1h-2zM42 52h5v1h-5zM48 52h5v1h-5zM55 52h1v1h-1zM0 53h1v1h-1zM2 53h3v1h-3zM6 53h1v1h-1zM8 53h1v1h-1zM12 53h1v1h-1zM18 53h1v1h-1zM20 53h1v1h-1zM22 53h1v1h-1zM25 53h2v1h-2zM30 53h2v1h-2zM34 53h1v1h-1zM36 53h2v1h-2zM39 53h3v1h-3zM43 53h1v1h-1zM46 53h1v1h-1zM48 53h3v1h-3zM55 53h1v1h-1zM0 54h1v1h-1zM2 54h3v1h-3zM6 54h1v1h-1zM8 54h1v1h-1zM10 54h3v1h-3zM14 54h1v1h-1zM16 54h1v1h-1zM20 54h2v1h-2zM24 54h1v1h-1zM26 54h3v1h-3zM32 54h1v1h-1zM36 54h3v1h-3zM42 54h1v1h-1zM44 54h2v1h-2zM47 54h2v1h-2zM50 54h3v1h-3zM55 54h1v1h-1zM0 55h1v1h-1zM6 55h1v1h-1zM8 55h1v1h-1zM10 55h1v1h-1zM12 55h2v1h-2zM15 55h4v1h-4zM20 55h2v1h-2zM23 55h1v1h-1zM26 55h1v1h-1zM28 55h2v1h-2zM32 55h1v1h-1zM36 55h1v1h-1zM39 55h1v1h-1zM41 55h2v1h-2zM46 55h1v1h-1zM49 55h2v1h-2zM56 55h1v1h-1zM0 56h7v1h-7zM10 56h3v1h-3zM14 56h1v1h-1zM17 56h3v1h-3zM21 56h4v1h-4zM27 56h2v1h-2zM31 56h1v1h-1zM33 56h2v1h-2zM40 56h2v1h-2zM43 56h1v1h-1zM46 56h1v1h-1zM48 56h3v1h-3zM52 56h1v1h-1zM55 56h2v1h-2z"/></svg></div>
      <div class="c dt"><div>2025-07-03<br>10:56:35</div></div>
      <div class="c ac"><div class="eb">编辑</div><div class="db">删除</div></div>
    </div>
  </div>
</div>
</div>
<div class="vsb"><div class="thumb"></div></div>
<div class="hsb"><div class="thumb"></div></div>
<svg style="position:absolute;left:0;top:0" width="1600" height="900" viewBox="0 0 1600 900">
  <polygon points="1587.4,11 1595.6,11 1591.5,6.7" fill="#a3a3a3"/>
  <polygon points="1587.6,871.9 1595.4,871.9 1591.5,876.2" fill="#505050"/>
  <polygon points="1572.8,887.6 1572.8,895.4 1577.3,891.5" fill="#505050"/>
  <polygon points="10.2,887.6 10.2,895.4 5.7,891.5" fill="#a3a3a3"/>
</svg>
<div class="corner"></div>
</body>
</html>
